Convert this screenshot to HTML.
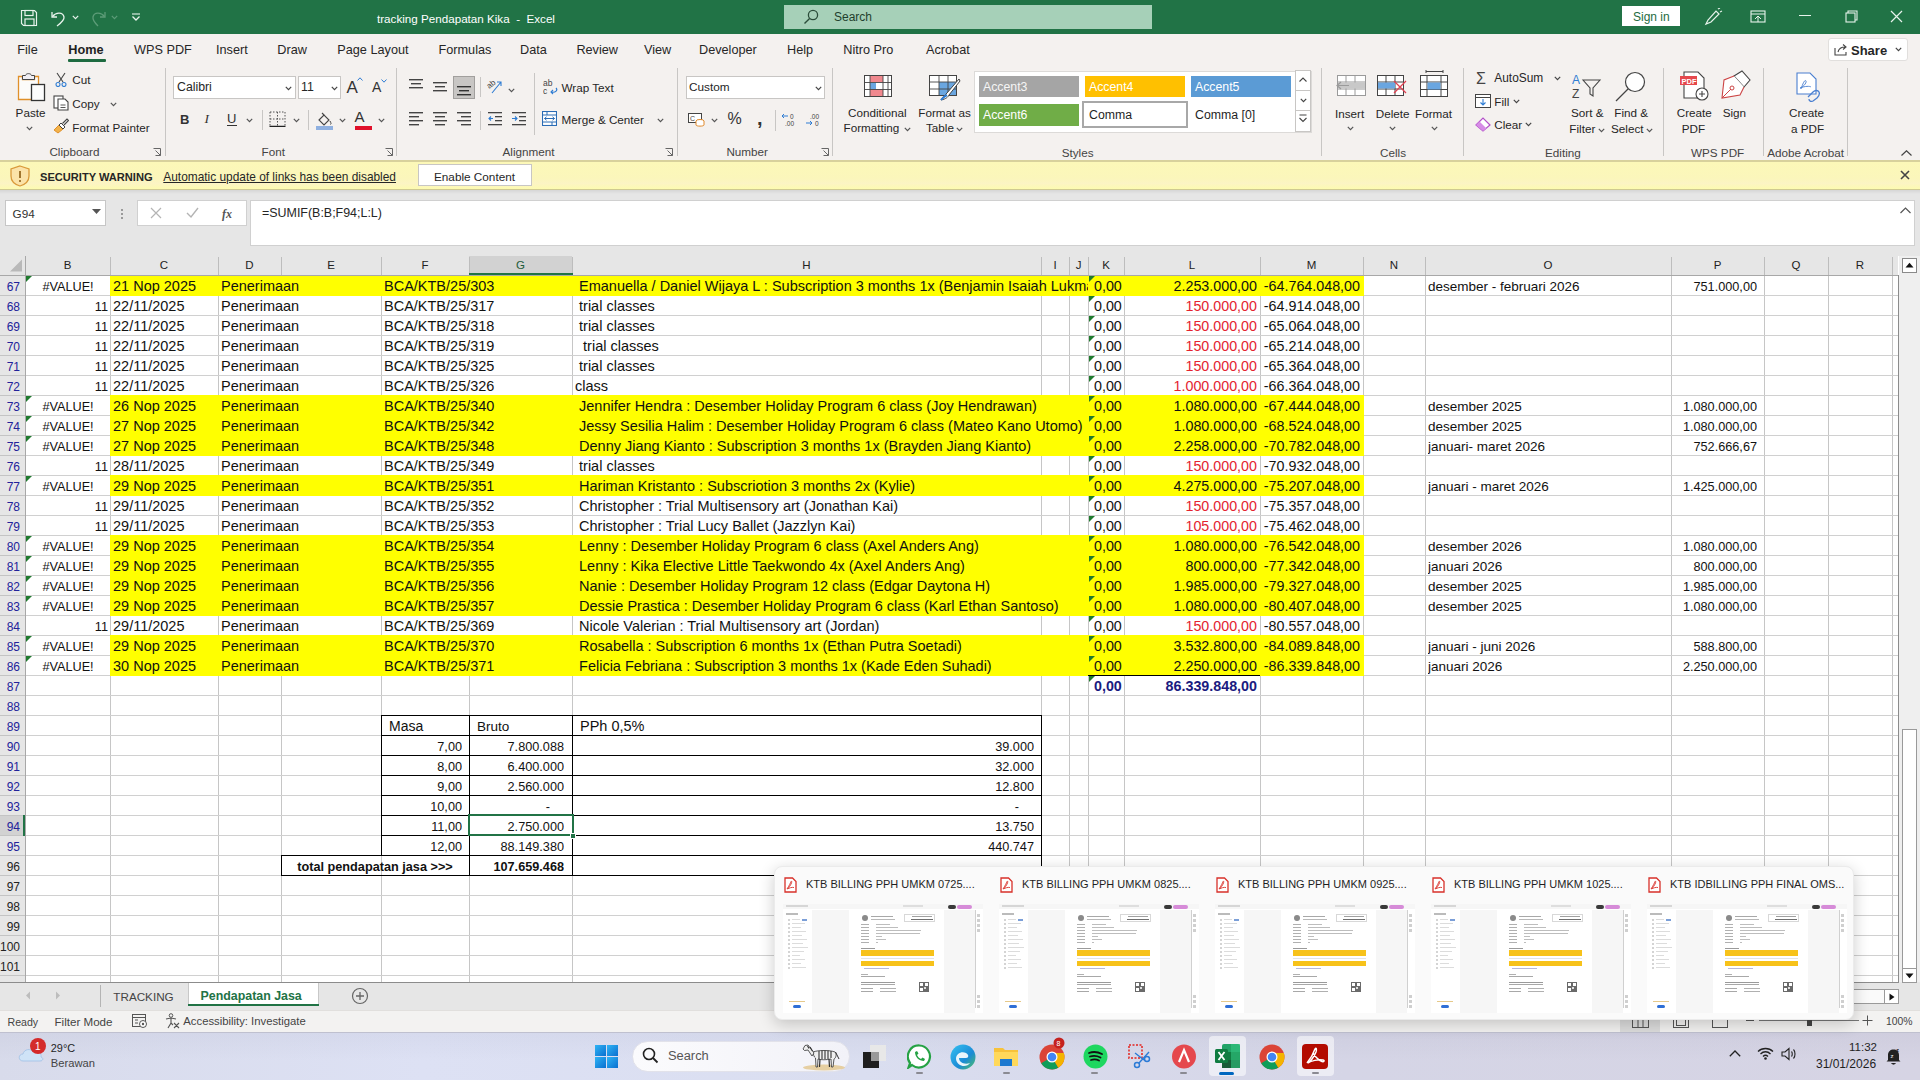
<!DOCTYPE html>
<html><head><meta charset="utf-8">
<style>
*{margin:0;padding:0;box-sizing:border-box}
html,body{width:1920px;height:1080px;overflow:hidden}
body{position:relative;font-family:"Liberation Sans",sans-serif;background:#fff;color:#000}
.a{position:absolute}
.t{position:absolute;white-space:nowrap;line-height:1}
.vl{position:absolute;top:276px;width:1px;height:706px;background:#c6c6c6}
.hl{position:absolute;left:25px;width:1873px;height:1px;background:#d0d0d0}
.yel{position:absolute;left:110px;width:1254px;background:#ffff00}
.c{position:absolute;height:19px;line-height:19px;white-space:nowrap;overflow:hidden;font-size:14.5px;color:#111}
.num{font-size:14.3px}
.cal{font-size:12.7px;margin-top:1px}
.calo{font-size:13.5px}
.red{color:#e4232f}
.navy{color:#1a1a80;font-weight:bold}
.bold{font-weight:bold}
.bk{position:absolute;background:#000}
.tri{position:absolute;width:0;height:0;border-top:6px solid #1f7a2e;border-right:6px solid transparent}
.ch{position:absolute;top:256px;height:19px;padding-top:4px;line-height:11.5px;text-align:center;font-size:11.5px}
.rh{position:absolute;left:0;width:25px;height:19px;padding-top:5px;line-height:12px;text-align:right;padding-right:5px;font-size:12px}
</style></head><body>
<div class="a" style="left:0px;top:0px;width:1920px;height:34px;background:#217346"></div>
<svg class="a" style="left:20px;top:9px;" width="18" height="18" viewBox="0 0 18 18"><path d="M1.5 1.5 H14.5 L16.5 3.5 V16.5 H3.5 L1.5 14.5 Z" fill="none" stroke="#e8f3ec" stroke-width="1.2"/><rect x="5" y="1.5" width="8" height="5" fill="none" stroke="#e8f3ec" stroke-width="1.2"/><rect x="5" y="10" width="9" height="6.5" fill="none" stroke="#e8f3ec" stroke-width="1.2"/></svg>
<svg class="a" style="left:50px;top:9px;" width="18" height="18" viewBox="0 0 18 18"><path d="M2 3 V8 H7" fill="none" stroke="#e8f3ec" stroke-width="1.3"/><path d="M2.5 7.5 C6 3 13 3 14 8 C14.5 11 11 14 7 17" fill="none" stroke="#e8f3ec" stroke-width="1.3"/></svg>
<svg class="a" style="left:72px;top:15px;" width="7" height="5" viewBox="0 0 7 5"><path d="M0.8 0.8 L3.5 3.6 L6.2 0.8" fill="none" stroke="#e8f3ec" stroke-width="1.2"/></svg>
<svg class="a" style="left:89px;top:9px;" width="18" height="18" viewBox="0 0 18 18"><path d="M16 3 V8 H11" fill="none" stroke="#5d9c78" stroke-width="1.3"/><path d="M15.5 7.5 C12 3 5 3 4 8 C3.5 11 6 14 9 17" fill="none" stroke="#5d9c78" stroke-width="1.3"/></svg>
<svg class="a" style="left:111px;top:15px;" width="7" height="5" viewBox="0 0 7 5"><path d="M0.8 0.8 L3.5 3.6 L6.2 0.8" fill="none" stroke="#5d9c78" stroke-width="1.2"/></svg>
<svg class="a" style="left:131px;top:13px;" width="10" height="9" viewBox="0 0 10 9"><path d="M1 1 H9" stroke="#e8f3ec" stroke-width="1.1"/><path d="M1.5 3.5 L5 7 L8.5 3.5" fill="none" stroke="#e8f3ec" stroke-width="1.3"/></svg>
<div class="t " style="left:377px;top:12.64px;font-size:11.65px;color:#ffffff;font-weight:normal;white-space:pre">tracking Pendapatan Kika  -  Excel</div>
<div class="a" style="left:784px;top:5px;width:368px;height:24px;background:#a6d0b8"></div>
<svg class="a" style="left:803px;top:9px;" width="16" height="16" viewBox="0 0 16 16"><circle cx="10" cy="6" r="4.6" fill="none" stroke="#2b4d3a" stroke-width="1.3"/><path d="M6.6 9.4 L1.5 14.5" stroke="#2b4d3a" stroke-width="1.4"/></svg>
<div class="t " style="left:834px;top:11.34px;font-size:12px;color:#1f3f2d;font-weight:normal;">Search</div>
<div class="a" style="left:1622px;top:6px;width:58px;height:20px;background:#ffffff"></div>
<div class="t " style="left:1633px;top:11.34px;font-size:12px;color:#1e6b41;font-weight:normal;">Sign in</div>
<svg class="a" style="left:1703px;top:8px;" width="20" height="18" viewBox="0 0 20 18"><path d="M3 16 L5 12 L13 3 L16 6 L8 14 Z" fill="none" stroke="#e8f3ec" stroke-width="1.2"/><path d="M15 1 L17 0 M17 4 L19 3 M14 0 L14.5 -1" stroke="#e8f3ec" stroke-width="1.1"/></svg>
<svg class="a" style="left:1750px;top:10px;" width="16" height="14" viewBox="0 0 16 14"><rect x="1" y="1" width="14" height="11" fill="none" stroke="#e8f3ec" stroke-width="1.1"/><path d="M1 4 H15" stroke="#e8f3ec" stroke-width="1"/><path d="M5 9 L8 6 L11 9 M8 6 V12" fill="none" stroke="#e8f3ec" stroke-width="1"/></svg>
<div class="a" style="left:1799px;top:15px;width:12px;height:1px;background:#e8f3ec"></div>
<svg class="a" style="left:1845px;top:10px;" width="13" height="13" viewBox="0 0 13 13"><rect x="1" y="3" width="9" height="9" fill="none" stroke="#e8f3ec" stroke-width="1.1"/><path d="M3 3 V1 H12 V10 H10" fill="none" stroke="#e8f3ec" stroke-width="1.1"/></svg>
<svg class="a" style="left:1890px;top:10px;" width="13" height="13" viewBox="0 0 13 13"><path d="M1 1 L12 12 M12 1 L1 12" stroke="#e8f3ec" stroke-width="1.2"/></svg>
<div class="a" style="left:0px;top:34px;width:1920px;height:126px;background:#f4f1ef"></div>
<div class="t " style="left:17.3px;top:43.65px;font-size:12.7px;color:#262626;font-weight:normal;">File</div>
<div class="t " style="left:68.3px;top:43.65px;font-size:12.7px;color:#1f1f1f;font-weight:normal;font-weight:600;">Home</div>
<div class="t " style="left:134px;top:43.65px;font-size:12.7px;color:#262626;font-weight:normal;">WPS PDF</div>
<div class="t " style="left:216px;top:43.65px;font-size:12.7px;color:#262626;font-weight:normal;">Insert</div>
<div class="t " style="left:277.3px;top:43.65px;font-size:12.7px;color:#262626;font-weight:normal;">Draw</div>
<div class="t " style="left:337.3px;top:43.65px;font-size:12.7px;color:#262626;font-weight:normal;">Page Layout</div>
<div class="t " style="left:438.5px;top:43.65px;font-size:12.7px;color:#262626;font-weight:normal;">Formulas</div>
<div class="t " style="left:520px;top:43.65px;font-size:12.7px;color:#262626;font-weight:normal;">Data</div>
<div class="t " style="left:576.4px;top:43.65px;font-size:12.7px;color:#262626;font-weight:normal;">Review</div>
<div class="t " style="left:644px;top:43.65px;font-size:12.7px;color:#262626;font-weight:normal;">View</div>
<div class="t " style="left:699px;top:43.65px;font-size:12.7px;color:#262626;font-weight:normal;">Developer</div>
<div class="t " style="left:787px;top:43.65px;font-size:12.7px;color:#262626;font-weight:normal;">Help</div>
<div class="t " style="left:843.3px;top:43.65px;font-size:12.7px;color:#262626;font-weight:normal;">Nitro Pro</div>
<div class="t " style="left:926px;top:43.65px;font-size:12.7px;color:#262626;font-weight:normal;">Acrobat</div>
<div class="a" style="left:68px;top:59px;width:38px;height:3px;background:#1e6b41;border-radius:1px"></div>
<div class="a" style="left:1828px;top:38px;width:80px;height:23px;background:#ffffff;border:1px solid #e1dfdd;border-radius:3px"></div>
<svg class="a" style="left:1834px;top:43px;" width="15" height="13" viewBox="0 0 15 13"><path d="M1 5 V12 H12 V9" fill="none" stroke="#444" stroke-width="1.1"/><path d="M4 9 C5 5 8 4 11 4 M9 1.5 L12 4 L9 6.5" fill="none" stroke="#444" stroke-width="1.1"/></svg>
<div class="t " style="left:1851px;top:44.00px;font-size:13px;color:#262626;font-weight:normal;font-weight:bold">Share</div>
<svg class="a" style="left:1895px;top:47px;" width="7" height="5" viewBox="0 0 7 5"><path d="M0.8 0.8 L3.5 3.6 L6.2 0.8" fill="none" stroke="#444" stroke-width="1.2"/></svg>
<svg class="a" style="left:14px;top:71px;" width="32" height="32" viewBox="0 0 32 32"><path d="M4.5 5.5 H8.5 V8.5 H20.5 V5.5 H24.5 V28.5 H4.5 Z" fill="#fcfbfa" stroke="#e0902a" stroke-width="1.3"/><path d="M8.5 8.5 V4.5 H11.5 C12 2 17 2 17.5 4.5 H20.5 V8.5 Z" fill="#f0eef4" stroke="#444" stroke-width="1"/><rect x="17.5" y="13.5" width="13" height="16" fill="#fcfcfc" stroke="#333" stroke-width="1.3"/></svg>
<div class="t " style="left:15.6px;top:106.80px;font-size:11.7px;color:#262626;font-weight:normal;">Paste</div>
<svg class="a" style="left:26px;top:126px;" width="7" height="5" viewBox="0 0 7 5"><path d="M0.8 0.8 L3.5 3.6 L6.2 0.8" fill="none" stroke="#555" stroke-width="1.2"/></svg>
<svg class="a" style="left:55px;top:72px;" width="12" height="15" viewBox="0 0 12 15"><path d="M2 1 L8 10 M10 1 L4 10" stroke="#444" stroke-width="1.1"/><circle cx="3" cy="12.5" r="2" fill="none" stroke="#2e7cd3" stroke-width="1.1"/><circle cx="9" cy="12.5" r="2" fill="none" stroke="#2e7cd3" stroke-width="1.1"/></svg>
<div class="t " style="left:72.3px;top:74.10px;font-size:11.7px;color:#262626;font-weight:normal;">Cut</div>
<svg class="a" style="left:53px;top:95px;" width="16" height="16" viewBox="0 0 16 16"><rect x="1" y="1" width="9" height="12" fill="#fff" stroke="#444" stroke-width="1.1"/><path d="M5 4 H12 L15 7 V15 H5 Z" fill="#fff" stroke="#444" stroke-width="1.1"/><path d="M7.5 10 H12.5 M7.5 12.5 H12.5" stroke="#444" stroke-width="0.9"/></svg>
<div class="t " style="left:72.3px;top:97.60px;font-size:11.7px;color:#262626;font-weight:normal;">Copy</div>
<svg class="a" style="left:110px;top:102px;" width="7" height="5" viewBox="0 0 7 5"><path d="M0.8 0.8 L3.5 3.6 L6.2 0.8" fill="none" stroke="#555" stroke-width="1.2"/></svg>
<svg class="a" style="left:53px;top:118px;" width="16" height="16" viewBox="0 0 16 16"><path d="M1 12 L6 7 L10 11 L5 15 Z" fill="#f2b24a" stroke="#e0902a" stroke-width="1"/><path d="M6 7 L8 5 L12 9 L10 11 Z" fill="#fff" stroke="#444" stroke-width="1"/><path d="M9.5 5.5 L14 1 L15.5 2.5 L11 7" fill="#fff" stroke="#444" stroke-width="1.1"/></svg>
<div class="t " style="left:72.3px;top:121.60px;font-size:11.7px;color:#262626;font-weight:normal;">Format Painter</div>
<div class="t " style="left:49.4px;top:146.30px;font-size:11.7px;color:#444;font-weight:normal;">Clipboard</div>
<svg class="a" style="left:153px;top:148px;" width="8" height="8" viewBox="0 0 8 8"><path d="M0.5 0.5 H7.5 V7.5 M7.5 7.5 L2.5 2.5 M2.5 7.5 H7.5" fill="none" stroke="#666" stroke-width="1"/></svg>
<div class="a" style="left:164.5px;top:68px;width:1px;height:88px;background:#c8c6c4"></div>
<div class="a" style="left:173px;top:76px;width:123px;height:23px;background:#fff;border:1px solid #c8c6c4"></div>
<div class="t " style="left:177px;top:81.29px;font-size:12.3px;color:#262626;font-weight:normal;">Calibri</div>
<svg class="a" style="left:285px;top:86px;" width="7" height="5" viewBox="0 0 7 5"><path d="M0.8 0.8 L3.5 3.6 L6.2 0.8" fill="none" stroke="#444" stroke-width="1.2"/></svg>
<div class="a" style="left:298px;top:76px;width:43px;height:23px;background:#fff;border:1px solid #c8c6c4"></div>
<div class="t " style="left:301px;top:81.29px;font-size:12.3px;color:#262626;font-weight:normal;">11</div>
<svg class="a" style="left:331px;top:86px;" width="7" height="5" viewBox="0 0 7 5"><path d="M0.8 0.8 L3.5 3.6 L6.2 0.8" fill="none" stroke="#444" stroke-width="1.2"/></svg>
<div class="t " style="left:346.5px;top:78.61px;font-size:17px;color:#333;font-weight:normal;">A</div>
<svg class="a" style="left:357px;top:77px;" width="6" height="4" viewBox="0 0 6 4"><path d="M0.5 3.5 L3 0.8 L5.5 3.5" fill="none" stroke="#2e7cd3" stroke-width="1"/></svg>
<div class="t " style="left:372px;top:80.15px;font-size:14px;color:#333;font-weight:normal;">A</div>
<svg class="a" style="left:381px;top:79px;" width="6" height="4" viewBox="0 0 6 4"><path d="M0.5 0.5 L3 3.2 L5.5 0.5" fill="none" stroke="#2e7cd3" stroke-width="1"/></svg>
<div class="t " style="left:180px;top:112.50px;font-size:13px;color:#333;font-weight:normal;font-weight:bold">B</div>
<div class="t " style="left:204.5px;top:112.07px;font-size:13.5px;color:#333;font-weight:normal;font-style:italic;font-family:Liberation Serif,serif">I</div>
<div class="t " style="left:227px;top:111.50px;font-size:13px;color:#333;font-weight:normal;">U</div>
<div class="a" style="left:227px;top:125px;width:10px;height:1px;background:#333"></div>
<svg class="a" style="left:246px;top:118px;" width="7" height="5" viewBox="0 0 7 5"><path d="M0.8 0.8 L3.5 3.6 L6.2 0.8" fill="none" stroke="#555" stroke-width="1.2"/></svg>
<div class="a" style="left:262px;top:110px;width:1px;height:20px;background:#c8c6c4"></div>
<svg class="a" style="left:269px;top:111px;" width="17" height="16" viewBox="0 0 17 16"><path d="M1 1 H16 M1 8 H16 M8.5 1 V15 M1 1 V15 M16 1 V15" fill="none" stroke="#555" stroke-width="1" stroke-dasharray="1.5 1.5"/><path d="M0.5 15.5 H16.5" stroke="#222" stroke-width="1.5"/></svg>
<svg class="a" style="left:293px;top:118px;" width="7" height="5" viewBox="0 0 7 5"><path d="M0.8 0.8 L3.5 3.6 L6.2 0.8" fill="none" stroke="#555" stroke-width="1.2"/></svg>
<div class="a" style="left:308px;top:110px;width:1px;height:20px;background:#c8c6c4"></div>
<svg class="a" style="left:315px;top:112px;" width="18" height="16" viewBox="0 0 18 16"><path d="M4 8 L9 3 L14 8 L9 13 Z" fill="none" stroke="#444" stroke-width="1.1"/><path d="M9 3 L7 1" stroke="#444" stroke-width="1.1"/><path d="M15 9 C16 11 16.5 12 15.5 12.5" fill="none" stroke="#444" stroke-width="1"/></svg>
<div class="a" style="left:315.5px;top:125.5px;width:17px;height:4px;background:#8fb0e0"></div>
<svg class="a" style="left:339px;top:118px;" width="7" height="5" viewBox="0 0 7 5"><path d="M0.8 0.8 L3.5 3.6 L6.2 0.8" fill="none" stroke="#555" stroke-width="1.2"/></svg>
<div class="t " style="left:354.5px;top:109.30px;font-size:15px;color:#333;font-weight:normal;">A</div>
<div class="a" style="left:354.5px;top:125.5px;width:17px;height:4px;background:#e0102a"></div>
<svg class="a" style="left:378px;top:118px;" width="7" height="5" viewBox="0 0 7 5"><path d="M0.8 0.8 L3.5 3.6 L6.2 0.8" fill="none" stroke="#555" stroke-width="1.2"/></svg>
<div class="t " style="left:261.5px;top:146.30px;font-size:11.7px;color:#444;font-weight:normal;">Font</div>
<svg class="a" style="left:385px;top:148px;" width="8" height="8" viewBox="0 0 8 8"><path d="M0.5 0.5 H7.5 V7.5 M7.5 7.5 L2.5 2.5 M2.5 7.5 H7.5" fill="none" stroke="#666" stroke-width="1"/></svg>
<div class="a" style="left:396px;top:68px;width:1px;height:88px;background:#c8c6c4"></div>
<svg class="a" style="left:409px;top:79px;" width="16" height="12" viewBox="0 0 16 12"><rect x="0" y="0" width="14" height="1.4" fill="#444"/><rect x="2" y="4" width="10" height="1.4" fill="#444"/><rect x="0" y="8" width="14" height="1.4" fill="#444"/></svg>
<svg class="a" style="left:433px;top:82px;" width="16" height="12" viewBox="0 0 16 12"><rect x="0" y="0" width="14" height="1.4" fill="#444"/><rect x="2" y="4" width="10" height="1.4" fill="#444"/><rect x="0" y="8" width="14" height="1.4" fill="#444"/></svg>
<div class="a" style="left:453px;top:76px;width:22px;height:23px;background:#c8c6c4;border:1px solid #a19f9d"></div>
<svg class="a" style="left:457px;top:86px;" width="16" height="12" viewBox="0 0 16 12"><rect x="0" y="0" width="14" height="1.4" fill="#333"/><rect x="2" y="4" width="10" height="1.4" fill="#333"/><rect x="0" y="8" width="14" height="1.4" fill="#333"/></svg>
<div class="a" style="left:479.5px;top:77px;width:1px;height:20px;background:#c8c6c4"></div>
<svg class="a" style="left:486px;top:78px;" width="18" height="17" viewBox="0 0 18 17"><text x="1" y="9" font-size="8" fill="#444" transform="rotate(-40 5 7)" font-family="Liberation Sans">ab</text><path d="M6 15 L15 4 M11 4 H15 V8" fill="none" stroke="#2e7cd3" stroke-width="1.1"/></svg>
<svg class="a" style="left:508px;top:88px;" width="7" height="5" viewBox="0 0 7 5"><path d="M0.8 0.8 L3.5 3.6 L6.2 0.8" fill="none" stroke="#555" stroke-width="1.2"/></svg>
<svg class="a" style="left:409px;top:112px;" width="14" height="16" viewBox="0 0 14 16"><rect x="0" y="0" width="14" height="1.4" fill="#444"/><rect x="0" y="4" width="10" height="1.4" fill="#444"/><rect x="0" y="8" width="14" height="1.4" fill="#444"/><rect x="0" y="12" width="10" height="1.4" fill="#444"/></svg>
<svg class="a" style="left:433px;top:112px;" width="16" height="16" viewBox="0 0 16 16"><rect x="0" y="0" width="14" height="1.4" fill="#444"/><rect x="2" y="4" width="10" height="1.4" fill="#444"/><rect x="0" y="8" width="14" height="1.4" fill="#444"/><rect x="2" y="12" width="10" height="1.4" fill="#444"/></svg>
<svg class="a" style="left:457px;top:112px;" width="18" height="16" viewBox="0 0 18 16"><rect x="0" y="0" width="14" height="1.4" fill="#444"/><rect x="4" y="4" width="10" height="1.4" fill="#444"/><rect x="0" y="8" width="14" height="1.4" fill="#444"/><rect x="4" y="12" width="10" height="1.4" fill="#444"/></svg>
<div class="a" style="left:479.5px;top:111px;width:1px;height:19px;background:#c8c6c4"></div>
<svg class="a" style="left:488px;top:112px;" width="15" height="14" viewBox="0 0 15 14"><rect x="0" y="0" width="14" height="1.3" fill="#444"/><rect x="7" y="4" width="7" height="1.3" fill="#444"/><rect x="7" y="8" width="7" height="1.3" fill="#444"/><rect x="0" y="12" width="14" height="1.3" fill="#444"/><path d="M5 6.5 H1 M3 4.5 L1 6.5 L3 8.5" fill="none" stroke="#2e7cd3" stroke-width="1.1"/></svg>
<svg class="a" style="left:512px;top:112px;" width="15" height="14" viewBox="0 0 15 14"><rect x="0" y="0" width="14" height="1.3" fill="#444"/><rect x="7" y="4" width="7" height="1.3" fill="#444"/><rect x="7" y="8" width="7" height="1.3" fill="#444"/><rect x="0" y="12" width="14" height="1.3" fill="#444"/><path d="M0 6.5 H5 M3 4.5 L5 6.5 L3 8.5" fill="none" stroke="#2e7cd3" stroke-width="1.1"/></svg>
<div class="a" style="left:534.3px;top:73px;width:1px;height:62px;background:#c8c6c4"></div>
<svg class="a" style="left:543px;top:79px;" width="16" height="16" viewBox="0 0 16 16"><text x="0" y="7" font-size="8.5" fill="#444" font-family="Liberation Sans">ab</text><text x="0" y="15" font-size="8.5" fill="#444" font-family="Liberation Sans">c</text><path d="M13 9 C15 11 13 14 8 13 M10 11 L8 13 L10 15" fill="none" stroke="#2e7cd3" stroke-width="1.1"/></svg>
<div class="t " style="left:561.5px;top:81.80px;font-size:11.7px;color:#262626;font-weight:normal;">Wrap Text</div>
<svg class="a" style="left:542px;top:111px;" width="15" height="15" viewBox="0 0 15 15"><rect x="0.5" y="0.5" width="14" height="14" fill="#fff" stroke="#2b6cb5" stroke-width="1.1"/><path d="M0.5 4 H14.5 M0.5 11 H14.5 M5 0.5 V4 M10 11 V14.5" stroke="#2b6cb5" stroke-width="1"/><path d="M2.5 7.5 H12.5 M4.5 5.8 L2.5 7.5 L4.5 9.2 M10.5 5.8 L12.5 7.5 L10.5 9.2" fill="none" stroke="#2b6cb5" stroke-width="1"/></svg>
<div class="t " style="left:561.5px;top:113.50px;font-size:11.7px;color:#262626;font-weight:normal;">Merge &amp; Center</div>
<svg class="a" style="left:657px;top:118px;" width="7" height="5" viewBox="0 0 7 5"><path d="M0.8 0.8 L3.5 3.6 L6.2 0.8" fill="none" stroke="#555" stroke-width="1.2"/></svg>
<div class="t " style="left:502.5px;top:145.60px;font-size:11.7px;color:#444;font-weight:normal;">Alignment</div>
<svg class="a" style="left:665px;top:148px;" width="8" height="8" viewBox="0 0 8 8"><path d="M0.5 0.5 H7.5 V7.5 M7.5 7.5 L2.5 2.5 M2.5 7.5 H7.5" fill="none" stroke="#666" stroke-width="1"/></svg>
<div class="a" style="left:676.6px;top:68px;width:1px;height:88px;background:#c8c6c4"></div>
<div class="a" style="left:685.5px;top:76px;width:139.5px;height:23px;background:#fff;border:1px solid #c8c6c4"></div>
<div class="t " style="left:689px;top:81.81px;font-size:11.8px;color:#262626;font-weight:normal;">Custom</div>
<svg class="a" style="left:815px;top:86px;" width="7" height="5" viewBox="0 0 7 5"><path d="M0.8 0.8 L3.5 3.6 L6.2 0.8" fill="none" stroke="#444" stroke-width="1.2"/></svg>
<svg class="a" style="left:688px;top:113px;" width="17" height="14" viewBox="0 0 17 14"><rect x="0.5" y="0.5" width="13" height="9" fill="#fff" stroke="#444" stroke-width="1"/><text x="2" y="8" font-size="7" fill="#444" font-family="Liberation Sans">C</text><ellipse cx="12" cy="8" rx="4" ry="1.5" fill="#fff" stroke="#e08a2c"/><path d="M8 8 V12 C8 13.5 16 13.5 16 12 V8" fill="#fff" stroke="#e08a2c"/></svg>
<svg class="a" style="left:711px;top:118px;" width="7" height="5" viewBox="0 0 7 5"><path d="M0.8 0.8 L3.5 3.6 L6.2 0.8" fill="none" stroke="#555" stroke-width="1.2"/></svg>
<div class="t " style="left:727.5px;top:111.46px;font-size:16px;color:#333;font-weight:normal;">%</div>
<div class="t " style="left:757px;top:108.07px;font-size:20px;color:#333;font-weight:normal;font-weight:bold">,</div>
<div class="a" style="left:774.5px;top:110px;width:1px;height:21px;background:#c8c6c4"></div>
<svg class="a" style="left:781px;top:113px;" width="17" height="14" viewBox="0 0 17 14"><path d="M7 3 H1 M3 1 L1 3 L3 5" fill="none" stroke="#2e7cd3" stroke-width="1"/><text x="9" y="6" font-size="6.5" fill="#444" font-family="Liberation Sans">0</text><text x="4" y="13" font-size="6.5" fill="#444" font-family="Liberation Sans">.00</text></svg>
<svg class="a" style="left:805px;top:113px;" width="17" height="14" viewBox="0 0 17 14"><text x="5" y="6" font-size="6.5" fill="#444" font-family="Liberation Sans">.00</text><path d="M1 10 H7 M5 8 L7 10 L5 12" fill="none" stroke="#2e7cd3" stroke-width="1"/><text x="10" y="13" font-size="6.5" fill="#444" font-family="Liberation Sans">0</text></svg>
<div class="t " style="left:726.4px;top:146.00px;font-size:11.7px;color:#444;font-weight:normal;">Number</div>
<svg class="a" style="left:821px;top:148px;" width="8" height="8" viewBox="0 0 8 8"><path d="M0.5 0.5 H7.5 V7.5 M7.5 7.5 L2.5 2.5 M2.5 7.5 H7.5" fill="none" stroke="#666" stroke-width="1"/></svg>
<div class="a" style="left:832.4px;top:68px;width:1px;height:88px;background:#c8c6c4"></div>
<svg class="a" style="left:864px;top:75px;" width="28" height="22" viewBox="0 0 28 22"><rect x="0.5" y="0.5" width="27" height="21" fill="#fff" stroke="#444" stroke-width="1"/><rect x="6" y="1" width="13" height="6" fill="#f0888e"/><rect x="6" y="8" width="6" height="6" fill="#6aa6e0"/><rect x="6" y="14" width="13" height="7" fill="#f0888e"/><path d="M0.5 7.5 H27.5 M0.5 14.5 H27.5 M6 0.5 V21.5 M19 0.5 V21.5 M24 0.5 V21.5" stroke="#444" stroke-width="0.9"/></svg>
<div class="t " style="left:848px;top:106.80px;font-size:11.7px;color:#262626;font-weight:normal;">Conditional</div>
<div class="t " style="left:843.5px;top:122.30px;font-size:11.7px;color:#262626;font-weight:normal;">Formatting</div>
<svg class="a" style="left:904px;top:127px;" width="7" height="5" viewBox="0 0 7 5"><path d="M0.8 0.8 L3.5 3.6 L6.2 0.8" fill="none" stroke="#555" stroke-width="1.2"/></svg>
<svg class="a" style="left:929px;top:75px;" width="32" height="27" viewBox="0 0 32 27"><rect x="0.5" y="0.5" width="27" height="20" fill="#fff" stroke="#444" stroke-width="1"/><rect x="10" y="7" width="17" height="13" fill="#6aa6e0"/><path d="M0.5 7 H27.5 M0.5 14 H27.5 M10 0.5 V20.5 M19 0.5 V20.5" stroke="#444" stroke-width="0.9"/><path d="M30 4 L18 18 C16 20 14 22 12 25 C17 24 19 22 20 20 L31 6 Z" fill="#fff" stroke="#444" stroke-width="1"/><path d="M12 25 C14 22 16 21 18 20" fill="#2e7cd3" stroke="#2e7cd3" stroke-width="2"/></svg>
<div class="t " style="left:918.3px;top:106.80px;font-size:11.7px;color:#262626;font-weight:normal;">Format as</div>
<div class="t " style="left:926px;top:122.30px;font-size:11.7px;color:#262626;font-weight:normal;">Table</div>
<svg class="a" style="left:956px;top:127px;" width="7" height="5" viewBox="0 0 7 5"><path d="M0.8 0.8 L3.5 3.6 L6.2 0.8" fill="none" stroke="#555" stroke-width="1.2"/></svg>
<div class="a" style="left:974px;top:71px;width:338px;height:62px;background:#fff;border:1px solid #dcdad8"></div>
<div class="a" style="left:979px;top:76px;width:100px;height:21px;background:#a5a5a5"></div>
<div class="t " style="left:983px;top:81.09px;font-size:12.3px;color:#f5f5f5;font-weight:normal;">Accent3</div>
<div class="a" style="left:1085px;top:76px;width:100px;height:21px;background:#ffc000"></div>
<div class="t " style="left:1089px;top:81.09px;font-size:12.3px;color:#ffffff;font-weight:normal;">Accent4</div>
<div class="a" style="left:1191px;top:76px;width:100px;height:21px;background:#5b9bd5"></div>
<div class="t " style="left:1195px;top:81.09px;font-size:12.3px;color:#ffffff;font-weight:normal;">Accent5</div>
<div class="a" style="left:979px;top:104px;width:100px;height:22px;background:#70ad47"></div>
<div class="t " style="left:983px;top:109.09px;font-size:12.3px;color:#ffffff;font-weight:normal;">Accent6</div>
<div class="a" style="left:1082px;top:101px;width:106px;height:27px;background:#fff;border:2px solid #a8a8a8"></div>
<div class="t " style="left:1089px;top:109.09px;font-size:12.3px;color:#1f1f1f;font-weight:normal;">Comma</div>
<div class="t " style="left:1195px;top:109.09px;font-size:12.3px;color:#1f1f1f;font-weight:normal;">Comma [0]</div>
<div class="a" style="left:1295px;top:70px;width:16px;height:62px;background:#fff;border:1px solid #c8c6c4"></div>
<div class="a" style="left:1295px;top:90px;width:16px;height:1px;background:#c8c6c4"></div>
<div class="a" style="left:1295px;top:110px;width:16px;height:1px;background:#c8c6c4"></div>
<svg class="a" style="left:1299px;top:77px;" width="8" height="5" viewBox="0 0 8 5"><path d="M0.5 4.5 L4 1 L7.5 4.5" fill="none" stroke="#444" stroke-width="1.1"/></svg>
<svg class="a" style="left:1300px;top:98px;" width="7" height="5" viewBox="0 0 7 5"><path d="M0.8 0.8 L3.5 3.6 L6.2 0.8" fill="none" stroke="#444" stroke-width="1.2"/></svg>
<svg class="a" style="left:1299px;top:114px;" width="8" height="10" viewBox="0 0 8 10"><path d="M0.5 1 H7.5" stroke="#444" stroke-width="1"/><path d="M0.5 4 L4 7.5 L7.5 4" fill="none" stroke="#444" stroke-width="1.1"/></svg>
<div class="t " style="left:1061.7px;top:146.80px;font-size:11.7px;color:#444;font-weight:normal;">Styles</div>
<div class="a" style="left:1320.7px;top:68px;width:1px;height:88px;background:#c8c6c4"></div>
<svg class="a" style="left:1335px;top:73px;" width="32" height="26" viewBox="0 0 32 26"><g stroke="#9a9a9a" fill="#fff" stroke-width="1"><rect x="2.5" y="2.5" width="28" height="20"/><path d="M2.5 9 H30.5 M2.5 16 H30.5 M11 2.5 V22.5 M20 2.5 V22.5"/></g><rect x="3" y="9.5" width="27" height="6" fill="#c8c8c8"/><path d="M14 12.5 H2 M6 9 L2 12.5 L6 16" fill="none" stroke="#9a9a9a" stroke-width="1.2"/></svg>
<div class="t " style="left:1335px;top:108.40px;font-size:11.7px;color:#262626;font-weight:normal;">Insert</div>
<svg class="a" style="left:1347px;top:126px;" width="7" height="5" viewBox="0 0 7 5"><path d="M0.8 0.8 L3.5 3.6 L6.2 0.8" fill="none" stroke="#555" stroke-width="1.2"/></svg>
<svg class="a" style="left:1377px;top:73px;" width="31" height="26" viewBox="0 0 31 26"><g stroke="#444" fill="#fff" stroke-width="1"><rect x="0.5" y="2.5" width="26" height="20"/><path d="M0.5 9 H26.5 M0.5 16 H26.5 M9 2.5 V22.5 M18 2.5 V22.5"/></g><rect x="1" y="9.5" width="17" height="6" fill="#6aa6e0"/><path d="M17 8 L29 20 M29 8 L17 20" stroke="#e04050" stroke-width="1.3"/></svg>
<div class="t " style="left:1375.7px;top:108.40px;font-size:11.7px;color:#262626;font-weight:normal;">Delete</div>
<svg class="a" style="left:1389px;top:126px;" width="7" height="5" viewBox="0 0 7 5"><path d="M0.8 0.8 L3.5 3.6 L6.2 0.8" fill="none" stroke="#555" stroke-width="1.2"/></svg>
<svg class="a" style="left:1420px;top:70px;" width="29" height="28" viewBox="0 0 29 28"><path d="M6 1.5 H23 M6 0 V3 M23 0 V3" stroke="#444" stroke-width="1"/><g stroke="#444" fill="#fff" stroke-width="1"><rect x="0.5" y="5.5" width="27" height="21"/><path d="M0.5 12 H27.5 M0.5 19.5 H27.5 M7 5.5 V26.5 M21 5.5 V26.5"/></g><rect x="7.5" y="12.5" width="13" height="7" fill="#6aa6e0"/></svg>
<div class="t " style="left:1415px;top:108.40px;font-size:11.7px;color:#262626;font-weight:normal;">Format</div>
<svg class="a" style="left:1431px;top:126px;" width="7" height="5" viewBox="0 0 7 5"><path d="M0.8 0.8 L3.5 3.6 L6.2 0.8" fill="none" stroke="#555" stroke-width="1.2"/></svg>
<div class="t " style="left:1380px;top:146.80px;font-size:11.7px;color:#444;font-weight:normal;">Cells</div>
<div class="a" style="left:1463.3px;top:68px;width:1px;height:88px;background:#c8c6c4"></div>
<div class="t " style="left:1476px;top:70.96px;font-size:16px;color:#444;font-weight:normal;">Σ</div>
<div class="t " style="left:1494.3px;top:73.23px;font-size:11.9px;color:#262626;font-weight:normal;">AutoSum</div>
<svg class="a" style="left:1554px;top:76px;" width="7" height="5" viewBox="0 0 7 5"><path d="M0.8 0.8 L3.5 3.6 L6.2 0.8" fill="none" stroke="#444" stroke-width="1.2"/></svg>
<svg class="a" style="left:1475px;top:94px;" width="16" height="14" viewBox="0 0 16 14"><rect x="0.5" y="0.5" width="15" height="13" fill="#fff" stroke="#444" stroke-width="1"/><path d="M0.5 3.5 H15.5" stroke="#444" stroke-width="1"/><path d="M8 5 V11 M5.5 8.5 L8 11 L10.5 8.5" fill="none" stroke="#2e7cd3" stroke-width="1.1"/></svg>
<div class="t " style="left:1494.3px;top:96.10px;font-size:11.7px;color:#262626;font-weight:normal;">Fill</div>
<svg class="a" style="left:1513px;top:99px;" width="7" height="5" viewBox="0 0 7 5"><path d="M0.8 0.8 L3.5 3.6 L6.2 0.8" fill="none" stroke="#444" stroke-width="1.2"/></svg>
<svg class="a" style="left:1475px;top:116px;" width="16" height="16" viewBox="0 0 16 16"><path d="M1 9 L8 2 L15 9 L8 15 Z" fill="#fff" stroke="#b24fc9" stroke-width="1.2"/><path d="M1 9 L4.5 5.5 L11.5 12.5 L8 15 Z" fill="#d68ce6"/></svg>
<div class="t " style="left:1494.3px;top:119.40px;font-size:11.7px;color:#262626;font-weight:normal;">Clear</div>
<svg class="a" style="left:1525px;top:122px;" width="7" height="5" viewBox="0 0 7 5"><path d="M0.8 0.8 L3.5 3.6 L6.2 0.8" fill="none" stroke="#444" stroke-width="1.2"/></svg>
<svg class="a" style="left:1572px;top:72px;" width="32" height="28" viewBox="0 0 32 28"><text x="0" y="12" font-size="12" fill="#2e7cd3" font-family="Liberation Sans">A</text><text x="0" y="26" font-size="12" fill="#444" font-family="Liberation Sans">Z</text><path d="M11 8 H28 L21 16 V24 L18 22 V16 Z" fill="none" stroke="#444" stroke-width="1.1"/></svg>
<div class="t " style="left:1571px;top:107.40px;font-size:11.7px;color:#262626;font-weight:normal;">Sort &amp;</div>
<div class="t " style="left:1569.3px;top:123.40px;font-size:11.7px;color:#262626;font-weight:normal;">Filter</div>
<svg class="a" style="left:1598px;top:128px;" width="7" height="5" viewBox="0 0 7 5"><path d="M0.8 0.8 L3.5 3.6 L6.2 0.8" fill="none" stroke="#555" stroke-width="1.2"/></svg>
<svg class="a" style="left:1614px;top:70px;" width="36" height="32" viewBox="0 0 36 32"><circle cx="21" cy="12" r="9.5" fill="#fff" stroke="#444" stroke-width="1.2"/><path d="M14 19 L2 31" stroke="#444" stroke-width="1.3"/></svg>
<div class="t " style="left:1614.3px;top:107.40px;font-size:11.7px;color:#262626;font-weight:normal;">Find &amp;</div>
<div class="t " style="left:1611px;top:123.40px;font-size:11.7px;color:#262626;font-weight:normal;">Select</div>
<svg class="a" style="left:1646px;top:128px;" width="7" height="5" viewBox="0 0 7 5"><path d="M0.8 0.8 L3.5 3.6 L6.2 0.8" fill="none" stroke="#555" stroke-width="1.2"/></svg>
<div class="t " style="left:1545px;top:146.80px;font-size:11.7px;color:#444;font-weight:normal;">Editing</div>
<div class="a" style="left:1663.3px;top:68px;width:1px;height:88px;background:#c8c6c4"></div>
<svg class="a" style="left:1678px;top:70px;" width="32" height="32" viewBox="0 0 32 32"><path d="M6 2 H20 L26 8 V28 H6 Z" fill="#fff" stroke="#444" stroke-width="1.1"/><rect x="2" y="6" width="17" height="9" fill="#e5484d"/><text x="3.5" y="13.5" font-size="7.5" fill="#fff" font-family="Liberation Sans" font-weight="bold">PDF</text><circle cx="24" cy="24" r="6" fill="#fff" stroke="#444" stroke-width="1.1"/><path d="M24 21 V27 M21 24 H27" stroke="#444" stroke-width="1.1"/></svg>
<div class="t " style="left:1676.7px;top:107.40px;font-size:11.7px;color:#262626;font-weight:normal;">Create</div>
<div class="t " style="left:1681.7px;top:123.40px;font-size:11.7px;color:#262626;font-weight:normal;">PDF</div>
<svg class="a" style="left:1720px;top:70px;" width="31" height="30" viewBox="0 0 31 30"><path d="M14 6 L22 1 L30 10 L24 17 Z" fill="#fff" stroke="#444" stroke-width="1.1"/><path d="M14 6 L4 10 L2 28 L20 25 L24 17" fill="#fff" stroke="#c44" stroke-width="1.1"/><circle cx="12" cy="18" r="2" fill="none" stroke="#c44"/><path d="M2 28 L11 19" stroke="#c44"/></svg>
<div class="t " style="left:1722.7px;top:107.40px;font-size:11.7px;color:#262626;font-weight:normal;">Sign</div>
<div class="t " style="left:1691px;top:146.80px;font-size:11.7px;color:#444;font-weight:normal;">WPS PDF</div>
<div class="a" style="left:1763.3px;top:68px;width:1px;height:88px;background:#c8c6c4"></div>
<svg class="a" style="left:1795px;top:72px;" width="28" height="30" viewBox="0 0 28 30"><path d="M2 1 H15 L21 7 V22 H2 Z" fill="#fff" stroke="#4a7fd0" stroke-width="1.1"/><path d="M6 17 C8 11 10 7 11 9 C12 11 7 16 5 16 C10 14 15 14 16 15" fill="none" stroke="#4a7fd0" stroke-width="0.9"/><path d="M13 25 L18 20 C20 18 23 18 24 20 C25 22 24 24 22 26 L18 29 C16 30 14 29 14 27" fill="none" stroke="#4a7fd0" stroke-width="1.3"/></svg>
<div class="t " style="left:1789px;top:107.40px;font-size:11.7px;color:#262626;font-weight:normal;">Create</div>
<div class="t " style="left:1791px;top:123.40px;font-size:11.7px;color:#262626;font-weight:normal;">a PDF</div>
<div class="t " style="left:1767.3px;top:146.80px;font-size:11.7px;color:#444;font-weight:normal;">Adobe Acrobat</div>
<div class="a" style="left:1846.7px;top:68px;width:1px;height:88px;background:#c8c6c4"></div>
<svg class="a" style="left:1901px;top:150px;" width="11" height="6" viewBox="0 0 11 6"><path d="M0.5 5.5 L5.5 0.8 L10.5 5.5" fill="none" stroke="#444" stroke-width="1.2"/></svg>
<div class="a" style="left:0px;top:160px;width:1920px;height:30px;background:linear-gradient(#fcf8b8,#fbf6bb 60%,#fcf4c4 80%,#fdfbb0);border-top:2px solid #d8d19c;border-bottom:1px solid #cfc992"></div>
<svg class="a" style="left:9px;top:165px;" width="22" height="22" viewBox="0 0 22 22"><path d="M11 1 L20 4 V11 C20 16 16 19.5 11 21 C6 19.5 2 16 2 11 V4 Z" fill="#fbe3a8" stroke="#d99a3a" stroke-width="1.3"/><path d="M11 6 V13" stroke="#8a5a10" stroke-width="1.6"/><circle cx="11" cy="16" r="1" fill="#8a5a10"/></svg>
<div class="t " style="left:40px;top:172.30px;font-size:11.1px;color:#262626;font-weight:normal;font-weight:bold">SECURITY WARNING</div>
<div class="t " style="left:163.3px;top:171.63px;font-size:11.9px;color:#262626;font-weight:normal;text-decoration:underline">Automatic update of links has been disabled</div>
<div class="a" style="left:418px;top:164px;width:114px;height:22px;background:#fff;border:1px solid #c8c6c4"></div>
<div class="t " style="left:434px;top:170.55px;font-size:11.75px;color:#262626;font-weight:normal;">Enable Content</div>
<svg class="a" style="left:1900px;top:170px;" width="10" height="10" viewBox="0 0 10 10"><path d="M1 1 L9 9 M9 1 L1 9" stroke="#444" stroke-width="1.6"/></svg>
<div class="a" style="left:0px;top:190px;width:1920px;height:66px;background:#e6e6e6"></div>
<div class="a" style="left:0px;top:190px;width:1920px;height:4px;background:linear-gradient(#d6d6d6,#e6e6e6)"></div>
<div class="a" style="left:5px;top:200px;width:101px;height:26px;background:#fff;border:1px solid #c6c6c6"></div>
<div class="t " style="left:12.5px;top:207.55px;font-size:11.75px;color:#333;font-weight:normal;">G94</div>
<svg class="a" style="left:92px;top:209px;" width="9" height="5" viewBox="0 0 9 5"><path d="M0 0 H9 L4.5 5 Z" fill="#555"/></svg>
<div class="a" style="left:121px;top:209px;width:2px;height:2px;background:#9a9a9a"></div>
<div class="a" style="left:121px;top:213px;width:2px;height:2px;background:#9a9a9a"></div>
<div class="a" style="left:121px;top:217px;width:2px;height:2px;background:#9a9a9a"></div>
<div class="a" style="left:137px;top:200px;width:110px;height:26px;background:#fff;border:1px solid #d0d0d0"></div>
<svg class="a" style="left:150px;top:207px;" width="12" height="12" viewBox="0 0 12 12"><path d="M1 1 L11 11 M11 1 L1 11" stroke="#b4b4b4" stroke-width="1.2"/></svg>
<svg class="a" style="left:186px;top:207px;" width="13" height="12" viewBox="0 0 13 12"><path d="M1 6 L5 10 L12 1" fill="none" stroke="#b4b4b4" stroke-width="1.4"/></svg>
<div class="t " style="left:222px;top:207.84px;font-size:12px;color:#555;font-weight:normal;font-style:italic;font-family:Liberation Serif,serif;font-weight:bold">fx</div>
<div class="a" style="left:250px;top:200px;width:1665px;height:46px;background:#fff;border:1px solid #d0d0d0"></div>
<div class="t " style="left:262px;top:206.96px;font-size:12.45px;color:#262626;font-weight:normal;">=SUMIF(B:B;F94;L:L)</div>
<svg class="a" style="left:1900px;top:207px;" width="11" height="7" viewBox="0 0 11 7"><path d="M0.5 6 L5.5 1 L10.5 6" fill="none" stroke="#555" stroke-width="1.2"/></svg>
<!-- grid -->
<div class="a" style="left:25px;top:276px;width:1873px;height:706px;background:#fff"></div>
<div class="vl" style="left:110px"></div>
<div class="vl" style="left:218px"></div>
<div class="vl" style="left:281px"></div>
<div class="vl" style="left:381px"></div>
<div class="vl" style="left:469px"></div>
<div class="vl" style="left:572px"></div>
<div class="vl" style="left:1041px"></div>
<div class="vl" style="left:1069px"></div>
<div class="vl" style="left:1088px"></div>
<div class="vl" style="left:1124px"></div>
<div class="vl" style="left:1260px"></div>
<div class="vl" style="left:1363px"></div>
<div class="vl" style="left:1425px"></div>
<div class="vl" style="left:1671px"></div>
<div class="vl" style="left:1764px"></div>
<div class="vl" style="left:1828px"></div>
<div class="vl" style="left:1892px"></div>
<div class="hl" style="top:295px"></div>
<div class="hl" style="top:315px"></div>
<div class="hl" style="top:335px"></div>
<div class="hl" style="top:355px"></div>
<div class="hl" style="top:375px"></div>
<div class="hl" style="top:395px"></div>
<div class="hl" style="top:415px"></div>
<div class="hl" style="top:435px"></div>
<div class="hl" style="top:455px"></div>
<div class="hl" style="top:475px"></div>
<div class="hl" style="top:495px"></div>
<div class="hl" style="top:515px"></div>
<div class="hl" style="top:535px"></div>
<div class="hl" style="top:555px"></div>
<div class="hl" style="top:575px"></div>
<div class="hl" style="top:595px"></div>
<div class="hl" style="top:615px"></div>
<div class="hl" style="top:635px"></div>
<div class="hl" style="top:655px"></div>
<div class="hl" style="top:675px"></div>
<div class="hl" style="top:695px"></div>
<div class="hl" style="top:715px"></div>
<div class="hl" style="top:735px"></div>
<div class="hl" style="top:755px"></div>
<div class="hl" style="top:775px"></div>
<div class="hl" style="top:795px"></div>
<div class="hl" style="top:815px"></div>
<div class="hl" style="top:835px"></div>
<div class="hl" style="top:855px"></div>
<div class="hl" style="top:875px"></div>
<div class="hl" style="top:895px"></div>
<div class="hl" style="top:915px"></div>
<div class="hl" style="top:935px"></div>
<div class="hl" style="top:955px"></div>
<div class="hl" style="top:975px"></div>
<div class="a" style="left:281px;top:296px;width:1px;height:19px;background:#fff"></div>
<div class="a" style="left:469px;top:296px;width:1px;height:19px;background:#fff"></div>
<div class="a" style="left:281px;top:316px;width:1px;height:19px;background:#fff"></div>
<div class="a" style="left:469px;top:316px;width:1px;height:19px;background:#fff"></div>
<div class="a" style="left:281px;top:336px;width:1px;height:19px;background:#fff"></div>
<div class="a" style="left:469px;top:336px;width:1px;height:19px;background:#fff"></div>
<div class="a" style="left:281px;top:356px;width:1px;height:19px;background:#fff"></div>
<div class="a" style="left:469px;top:356px;width:1px;height:19px;background:#fff"></div>
<div class="a" style="left:281px;top:376px;width:1px;height:19px;background:#fff"></div>
<div class="a" style="left:469px;top:376px;width:1px;height:19px;background:#fff"></div>
<div class="a" style="left:281px;top:456px;width:1px;height:19px;background:#fff"></div>
<div class="a" style="left:469px;top:456px;width:1px;height:19px;background:#fff"></div>
<div class="a" style="left:281px;top:496px;width:1px;height:19px;background:#fff"></div>
<div class="a" style="left:469px;top:496px;width:1px;height:19px;background:#fff"></div>
<div class="a" style="left:281px;top:516px;width:1px;height:19px;background:#fff"></div>
<div class="a" style="left:469px;top:516px;width:1px;height:19px;background:#fff"></div>
<div class="a" style="left:281px;top:616px;width:1px;height:19px;background:#fff"></div>
<div class="a" style="left:469px;top:616px;width:1px;height:19px;background:#fff"></div>
<div class="yel" style="top:275px;height:21px"></div>
<div class="yel" style="top:395px;height:21px"></div>
<div class="yel" style="top:415px;height:21px"></div>
<div class="yel" style="top:435px;height:21px"></div>
<div class="yel" style="top:475px;height:21px"></div>
<div class="yel" style="top:535px;height:21px"></div>
<div class="yel" style="top:555px;height:21px"></div>
<div class="yel" style="top:575px;height:21px"></div>
<div class="yel" style="top:595px;height:21px"></div>
<div class="yel" style="top:635px;height:21px"></div>
<div class="yel" style="top:655px;height:21px"></div>
<div class="c cal" style="left:25px;top:277px;width:85px;text-align:center;padding-left:1px">#VALUE!</div>
<div class="tri" style="left:26px;top:276px"></div>
<div class="c ar" style="left:113px;top:277px;width:105px;">21 Nop 2025</div>
<div class="c ar" style="left:221px;top:277px;width:160px;">Penerimaan</div>
<div class="c ar" style="left:384px;top:277px;width:188px;">BCA/KTB/25/303</div>
<div class="c ar" style="left:575px;top:277px;width:513px;white-space:pre"> Emanuella / Daniel Wijaya L : Subscription 3 months 1x (Benjamin Isaiah Lukman)</div>
<div class="tri" style="left:1089px;top:276px"></div>
<div class="c num" style="left:1094px;top:277px;width:30px;">0,00</div>
<div class="c num" style="left:1124px;top:277px;width:133px;text-align:right;">2.253.000,00</div>
<div class="c num" style="left:1260px;top:277px;width:100px;text-align:right;">-64.764.048,00</div>
<div class="c calo" style="left:1428px;top:277px;width:243px;">desember - februari 2026</div>
<div class="c cal" style="left:1671px;top:277px;width:86px;text-align:right;">751.000,00</div>
<div class="c cal" style="left:25px;top:297px;width:83px;text-align:right;">11</div>
<div class="c ar" style="left:113px;top:297px;width:105px;">22/11/2025</div>
<div class="c ar" style="left:221px;top:297px;width:160px;">Penerimaan</div>
<div class="c ar" style="left:384px;top:297px;width:188px;">BCA/KTB/25/317</div>
<div class="c ar" style="left:575px;top:297px;width:513px;white-space:pre"> trial classes</div>
<div class="tri" style="left:1089px;top:296px"></div>
<div class="c num" style="left:1094px;top:297px;width:30px;">0,00</div>
<div class="c num red" style="left:1124px;top:297px;width:133px;text-align:right;">150.000,00</div>
<div class="c num" style="left:1260px;top:297px;width:100px;text-align:right;">-64.914.048,00</div>
<div class="c cal" style="left:25px;top:317px;width:83px;text-align:right;">11</div>
<div class="c ar" style="left:113px;top:317px;width:105px;">22/11/2025</div>
<div class="c ar" style="left:221px;top:317px;width:160px;">Penerimaan</div>
<div class="c ar" style="left:384px;top:317px;width:188px;">BCA/KTB/25/318</div>
<div class="c ar" style="left:575px;top:317px;width:513px;white-space:pre"> trial classes</div>
<div class="tri" style="left:1089px;top:316px"></div>
<div class="c num" style="left:1094px;top:317px;width:30px;">0,00</div>
<div class="c num red" style="left:1124px;top:317px;width:133px;text-align:right;">150.000,00</div>
<div class="c num" style="left:1260px;top:317px;width:100px;text-align:right;">-65.064.048,00</div>
<div class="c cal" style="left:25px;top:337px;width:83px;text-align:right;">11</div>
<div class="c ar" style="left:113px;top:337px;width:105px;">22/11/2025</div>
<div class="c ar" style="left:221px;top:337px;width:160px;">Penerimaan</div>
<div class="c ar" style="left:384px;top:337px;width:188px;">BCA/KTB/25/319</div>
<div class="c ar" style="left:575px;top:337px;width:513px;white-space:pre">  trial classes</div>
<div class="tri" style="left:1089px;top:336px"></div>
<div class="c num" style="left:1094px;top:337px;width:30px;">0,00</div>
<div class="c num red" style="left:1124px;top:337px;width:133px;text-align:right;">150.000,00</div>
<div class="c num" style="left:1260px;top:337px;width:100px;text-align:right;">-65.214.048,00</div>
<div class="c cal" style="left:25px;top:357px;width:83px;text-align:right;">11</div>
<div class="c ar" style="left:113px;top:357px;width:105px;">22/11/2025</div>
<div class="c ar" style="left:221px;top:357px;width:160px;">Penerimaan</div>
<div class="c ar" style="left:384px;top:357px;width:188px;">BCA/KTB/25/325</div>
<div class="c ar" style="left:575px;top:357px;width:513px;white-space:pre"> trial classes</div>
<div class="tri" style="left:1089px;top:356px"></div>
<div class="c num" style="left:1094px;top:357px;width:30px;">0,00</div>
<div class="c num red" style="left:1124px;top:357px;width:133px;text-align:right;">150.000,00</div>
<div class="c num" style="left:1260px;top:357px;width:100px;text-align:right;">-65.364.048,00</div>
<div class="c cal" style="left:25px;top:377px;width:83px;text-align:right;">11</div>
<div class="c ar" style="left:113px;top:377px;width:105px;">22/11/2025</div>
<div class="c ar" style="left:221px;top:377px;width:160px;">Penerimaan</div>
<div class="c ar" style="left:384px;top:377px;width:188px;">BCA/KTB/25/326</div>
<div class="c ar" style="left:575px;top:377px;width:513px;white-space:pre">class</div>
<div class="tri" style="left:1089px;top:376px"></div>
<div class="c num" style="left:1094px;top:377px;width:30px;">0,00</div>
<div class="c num red" style="left:1124px;top:377px;width:133px;text-align:right;">1.000.000,00</div>
<div class="c num" style="left:1260px;top:377px;width:100px;text-align:right;">-66.364.048,00</div>
<div class="c cal" style="left:25px;top:397px;width:85px;text-align:center;padding-left:1px">#VALUE!</div>
<div class="tri" style="left:26px;top:396px"></div>
<div class="c ar" style="left:113px;top:397px;width:105px;">26 Nop 2025</div>
<div class="c ar" style="left:221px;top:397px;width:160px;">Penerimaan</div>
<div class="c ar" style="left:384px;top:397px;width:188px;">BCA/KTB/25/340</div>
<div class="c ar" style="left:575px;top:397px;width:513px;white-space:pre"> Jennifer Hendra : Desember Holiday Program 6 class (Joy Hendrawan)</div>
<div class="tri" style="left:1089px;top:396px"></div>
<div class="c num" style="left:1094px;top:397px;width:30px;">0,00</div>
<div class="c num" style="left:1124px;top:397px;width:133px;text-align:right;">1.080.000,00</div>
<div class="c num" style="left:1260px;top:397px;width:100px;text-align:right;">-67.444.048,00</div>
<div class="c calo" style="left:1428px;top:397px;width:243px;">desember 2025</div>
<div class="c cal" style="left:1671px;top:397px;width:86px;text-align:right;">1.080.000,00</div>
<div class="c cal" style="left:25px;top:417px;width:85px;text-align:center;padding-left:1px">#VALUE!</div>
<div class="tri" style="left:26px;top:416px"></div>
<div class="c ar" style="left:113px;top:417px;width:105px;">27 Nop 2025</div>
<div class="c ar" style="left:221px;top:417px;width:160px;">Penerimaan</div>
<div class="c ar" style="left:384px;top:417px;width:188px;">BCA/KTB/25/342</div>
<div class="c ar" style="left:575px;top:417px;width:513px;white-space:pre"> Jessy Sesilia Halim : Desember Holiday Program 6 class (Mateo Kano Utomo)</div>
<div class="tri" style="left:1089px;top:416px"></div>
<div class="c num" style="left:1094px;top:417px;width:30px;">0,00</div>
<div class="c num" style="left:1124px;top:417px;width:133px;text-align:right;">1.080.000,00</div>
<div class="c num" style="left:1260px;top:417px;width:100px;text-align:right;">-68.524.048,00</div>
<div class="c calo" style="left:1428px;top:417px;width:243px;">desember 2025</div>
<div class="c cal" style="left:1671px;top:417px;width:86px;text-align:right;">1.080.000,00</div>
<div class="c cal" style="left:25px;top:437px;width:85px;text-align:center;padding-left:1px">#VALUE!</div>
<div class="tri" style="left:26px;top:436px"></div>
<div class="c ar" style="left:113px;top:437px;width:105px;">27 Nop 2025</div>
<div class="c ar" style="left:221px;top:437px;width:160px;">Penerimaan</div>
<div class="c ar" style="left:384px;top:437px;width:188px;">BCA/KTB/25/348</div>
<div class="c ar" style="left:575px;top:437px;width:513px;white-space:pre"> Denny Jiang Kianto : Subscription 3 months 1x (Brayden Jiang Kianto)</div>
<div class="tri" style="left:1089px;top:436px"></div>
<div class="c num" style="left:1094px;top:437px;width:30px;">0,00</div>
<div class="c num" style="left:1124px;top:437px;width:133px;text-align:right;">2.258.000,00</div>
<div class="c num" style="left:1260px;top:437px;width:100px;text-align:right;">-70.782.048,00</div>
<div class="c calo" style="left:1428px;top:437px;width:243px;">januari- maret 2026</div>
<div class="c cal" style="left:1671px;top:437px;width:86px;text-align:right;">752.666,67</div>
<div class="c cal" style="left:25px;top:457px;width:83px;text-align:right;">11</div>
<div class="c ar" style="left:113px;top:457px;width:105px;">28/11/2025</div>
<div class="c ar" style="left:221px;top:457px;width:160px;">Penerimaan</div>
<div class="c ar" style="left:384px;top:457px;width:188px;">BCA/KTB/25/349</div>
<div class="c ar" style="left:575px;top:457px;width:513px;white-space:pre"> trial classes</div>
<div class="tri" style="left:1089px;top:456px"></div>
<div class="c num" style="left:1094px;top:457px;width:30px;">0,00</div>
<div class="c num red" style="left:1124px;top:457px;width:133px;text-align:right;">150.000,00</div>
<div class="c num" style="left:1260px;top:457px;width:100px;text-align:right;">-70.932.048,00</div>
<div class="c cal" style="left:25px;top:477px;width:85px;text-align:center;padding-left:1px">#VALUE!</div>
<div class="tri" style="left:26px;top:476px"></div>
<div class="c ar" style="left:113px;top:477px;width:105px;">29 Nop 2025</div>
<div class="c ar" style="left:221px;top:477px;width:160px;">Penerimaan</div>
<div class="c ar" style="left:384px;top:477px;width:188px;">BCA/KTB/25/351</div>
<div class="c ar" style="left:575px;top:477px;width:513px;white-space:pre"> Hariman Kristanto : Subscriotion 3 months 2x (Kylie)</div>
<div class="tri" style="left:1089px;top:476px"></div>
<div class="c num" style="left:1094px;top:477px;width:30px;">0,00</div>
<div class="c num" style="left:1124px;top:477px;width:133px;text-align:right;">4.275.000,00</div>
<div class="c num" style="left:1260px;top:477px;width:100px;text-align:right;">-75.207.048,00</div>
<div class="c calo" style="left:1428px;top:477px;width:243px;">januari - maret 2026</div>
<div class="c cal" style="left:1671px;top:477px;width:86px;text-align:right;">1.425.000,00</div>
<div class="c cal" style="left:25px;top:497px;width:83px;text-align:right;">11</div>
<div class="c ar" style="left:113px;top:497px;width:105px;">29/11/2025</div>
<div class="c ar" style="left:221px;top:497px;width:160px;">Penerimaan</div>
<div class="c ar" style="left:384px;top:497px;width:188px;">BCA/KTB/25/352</div>
<div class="c ar" style="left:575px;top:497px;width:513px;white-space:pre"> Christopher : Trial Multisensory art (Jonathan Kai)</div>
<div class="tri" style="left:1089px;top:496px"></div>
<div class="c num" style="left:1094px;top:497px;width:30px;">0,00</div>
<div class="c num red" style="left:1124px;top:497px;width:133px;text-align:right;">150.000,00</div>
<div class="c num" style="left:1260px;top:497px;width:100px;text-align:right;">-75.357.048,00</div>
<div class="c cal" style="left:25px;top:517px;width:83px;text-align:right;">11</div>
<div class="c ar" style="left:113px;top:517px;width:105px;">29/11/2025</div>
<div class="c ar" style="left:221px;top:517px;width:160px;">Penerimaan</div>
<div class="c ar" style="left:384px;top:517px;width:188px;">BCA/KTB/25/353</div>
<div class="c ar" style="left:575px;top:517px;width:513px;white-space:pre"> Christopher : Trial Lucy Ballet (Jazzlyn Kai)</div>
<div class="tri" style="left:1089px;top:516px"></div>
<div class="c num" style="left:1094px;top:517px;width:30px;">0,00</div>
<div class="c num red" style="left:1124px;top:517px;width:133px;text-align:right;">105.000,00</div>
<div class="c num" style="left:1260px;top:517px;width:100px;text-align:right;">-75.462.048,00</div>
<div class="c cal" style="left:25px;top:537px;width:85px;text-align:center;padding-left:1px">#VALUE!</div>
<div class="tri" style="left:26px;top:536px"></div>
<div class="c ar" style="left:113px;top:537px;width:105px;">29 Nop 2025</div>
<div class="c ar" style="left:221px;top:537px;width:160px;">Penerimaan</div>
<div class="c ar" style="left:384px;top:537px;width:188px;">BCA/KTB/25/354</div>
<div class="c ar" style="left:575px;top:537px;width:513px;white-space:pre"> Lenny : Desember Holiday Program 6 class (Axel Anders Ang)</div>
<div class="tri" style="left:1089px;top:536px"></div>
<div class="c num" style="left:1094px;top:537px;width:30px;">0,00</div>
<div class="c num" style="left:1124px;top:537px;width:133px;text-align:right;">1.080.000,00</div>
<div class="c num" style="left:1260px;top:537px;width:100px;text-align:right;">-76.542.048,00</div>
<div class="c calo" style="left:1428px;top:537px;width:243px;">desember 2026</div>
<div class="c cal" style="left:1671px;top:537px;width:86px;text-align:right;">1.080.000,00</div>
<div class="c cal" style="left:25px;top:557px;width:85px;text-align:center;padding-left:1px">#VALUE!</div>
<div class="tri" style="left:26px;top:556px"></div>
<div class="c ar" style="left:113px;top:557px;width:105px;">29 Nop 2025</div>
<div class="c ar" style="left:221px;top:557px;width:160px;">Penerimaan</div>
<div class="c ar" style="left:384px;top:557px;width:188px;">BCA/KTB/25/355</div>
<div class="c ar" style="left:575px;top:557px;width:513px;white-space:pre"> Lenny : Kika Elective Little Taekwondo 4x (Axel Anders Ang)</div>
<div class="tri" style="left:1089px;top:556px"></div>
<div class="c num" style="left:1094px;top:557px;width:30px;">0,00</div>
<div class="c num" style="left:1124px;top:557px;width:133px;text-align:right;">800.000,00</div>
<div class="c num" style="left:1260px;top:557px;width:100px;text-align:right;">-77.342.048,00</div>
<div class="c calo" style="left:1428px;top:557px;width:243px;">januari 2026</div>
<div class="c cal" style="left:1671px;top:557px;width:86px;text-align:right;">800.000,00</div>
<div class="c cal" style="left:25px;top:577px;width:85px;text-align:center;padding-left:1px">#VALUE!</div>
<div class="tri" style="left:26px;top:576px"></div>
<div class="c ar" style="left:113px;top:577px;width:105px;">29 Nop 2025</div>
<div class="c ar" style="left:221px;top:577px;width:160px;">Penerimaan</div>
<div class="c ar" style="left:384px;top:577px;width:188px;">BCA/KTB/25/356</div>
<div class="c ar" style="left:575px;top:577px;width:513px;white-space:pre"> Nanie : Desember Holiday Program 12 class (Edgar Daytona H)</div>
<div class="tri" style="left:1089px;top:576px"></div>
<div class="c num" style="left:1094px;top:577px;width:30px;">0,00</div>
<div class="c num" style="left:1124px;top:577px;width:133px;text-align:right;">1.985.000,00</div>
<div class="c num" style="left:1260px;top:577px;width:100px;text-align:right;">-79.327.048,00</div>
<div class="c calo" style="left:1428px;top:577px;width:243px;">desember 2025</div>
<div class="c cal" style="left:1671px;top:577px;width:86px;text-align:right;">1.985.000,00</div>
<div class="c cal" style="left:25px;top:597px;width:85px;text-align:center;padding-left:1px">#VALUE!</div>
<div class="tri" style="left:26px;top:596px"></div>
<div class="c ar" style="left:113px;top:597px;width:105px;">29 Nop 2025</div>
<div class="c ar" style="left:221px;top:597px;width:160px;">Penerimaan</div>
<div class="c ar" style="left:384px;top:597px;width:188px;">BCA/KTB/25/357</div>
<div class="c ar" style="left:575px;top:597px;width:513px;white-space:pre"> Dessie Prastica : Desember Holiday Program 6 class (Karl Ethan Santoso)</div>
<div class="tri" style="left:1089px;top:596px"></div>
<div class="c num" style="left:1094px;top:597px;width:30px;">0,00</div>
<div class="c num" style="left:1124px;top:597px;width:133px;text-align:right;">1.080.000,00</div>
<div class="c num" style="left:1260px;top:597px;width:100px;text-align:right;">-80.407.048,00</div>
<div class="c calo" style="left:1428px;top:597px;width:243px;">desember 2025</div>
<div class="c cal" style="left:1671px;top:597px;width:86px;text-align:right;">1.080.000,00</div>
<div class="c cal" style="left:25px;top:617px;width:83px;text-align:right;">11</div>
<div class="c ar" style="left:113px;top:617px;width:105px;">29/11/2025</div>
<div class="c ar" style="left:221px;top:617px;width:160px;">Penerimaan</div>
<div class="c ar" style="left:384px;top:617px;width:188px;">BCA/KTB/25/369</div>
<div class="c ar" style="left:575px;top:617px;width:513px;white-space:pre"> Nicole Valerian : Trial Multisensory art (Jordan)</div>
<div class="tri" style="left:1089px;top:616px"></div>
<div class="c num" style="left:1094px;top:617px;width:30px;">0,00</div>
<div class="c num red" style="left:1124px;top:617px;width:133px;text-align:right;">150.000,00</div>
<div class="c num" style="left:1260px;top:617px;width:100px;text-align:right;">-80.557.048,00</div>
<div class="c cal" style="left:25px;top:637px;width:85px;text-align:center;padding-left:1px">#VALUE!</div>
<div class="tri" style="left:26px;top:636px"></div>
<div class="c ar" style="left:113px;top:637px;width:105px;">29 Nop 2025</div>
<div class="c ar" style="left:221px;top:637px;width:160px;">Penerimaan</div>
<div class="c ar" style="left:384px;top:637px;width:188px;">BCA/KTB/25/370</div>
<div class="c ar" style="left:575px;top:637px;width:513px;white-space:pre"> Rosabella : Subscription 6 months 1x (Ethan Putra Soetadi)</div>
<div class="tri" style="left:1089px;top:636px"></div>
<div class="c num" style="left:1094px;top:637px;width:30px;">0,00</div>
<div class="c num" style="left:1124px;top:637px;width:133px;text-align:right;">3.532.800,00</div>
<div class="c num" style="left:1260px;top:637px;width:100px;text-align:right;">-84.089.848,00</div>
<div class="c calo" style="left:1428px;top:637px;width:243px;">januari - juni 2026</div>
<div class="c cal" style="left:1671px;top:637px;width:86px;text-align:right;">588.800,00</div>
<div class="c cal" style="left:25px;top:657px;width:85px;text-align:center;padding-left:1px">#VALUE!</div>
<div class="tri" style="left:26px;top:656px"></div>
<div class="c ar" style="left:113px;top:657px;width:105px;">30 Nop 2025</div>
<div class="c ar" style="left:221px;top:657px;width:160px;">Penerimaan</div>
<div class="c ar" style="left:384px;top:657px;width:188px;">BCA/KTB/25/371</div>
<div class="c ar" style="left:575px;top:657px;width:513px;white-space:pre"> Felicia Febriana : Subscription 3 months 1x (Kade Eden Suhadi)</div>
<div class="tri" style="left:1089px;top:656px"></div>
<div class="c num" style="left:1094px;top:657px;width:30px;">0,00</div>
<div class="c num" style="left:1124px;top:657px;width:133px;text-align:right;">2.250.000,00</div>
<div class="c num" style="left:1260px;top:657px;width:100px;text-align:right;">-86.339.848,00</div>
<div class="c calo" style="left:1428px;top:657px;width:243px;">januari 2026</div>
<div class="c cal" style="left:1671px;top:657px;width:86px;text-align:right;">2.250.000,00</div>
<div class="tri" style="left:1089px;top:676px"></div>
<div class="a" style="left:1088px;top:675px;width:172px;height:1px;background:#000"></div>
<div class="c num navy" style="left:1094px;top:677px;width:30px;">0,00</div>
<div class="c num navy" style="left:1124px;top:677px;width:133px;text-align:right;">86.339.848,00</div>
<div class="c ar" style="left:389px;top:717px;width:80px;font-size:14px">Masa</div>
<div class="c calo" style="left:477px;top:717px;width:95px;">Bruto</div>
<div class="c ar" style="left:580px;top:717px;width:461px;">PPh 0,5%</div>
<div class="c cal" style="left:381px;top:737px;width:81px;text-align:right;">7,00</div>
<div class="c cal" style="left:469px;top:737px;width:95px;text-align:right;">7.800.088</div>
<div class="c cal" style="left:572px;top:737px;width:462px;text-align:right;">39.000</div>
<div class="c cal" style="left:381px;top:757px;width:81px;text-align:right;">8,00</div>
<div class="c cal" style="left:469px;top:757px;width:95px;text-align:right;">6.400.000</div>
<div class="c cal" style="left:572px;top:757px;width:462px;text-align:right;">32.000</div>
<div class="c cal" style="left:381px;top:777px;width:81px;text-align:right;">9,00</div>
<div class="c cal" style="left:469px;top:777px;width:95px;text-align:right;">2.560.000</div>
<div class="c cal" style="left:572px;top:777px;width:462px;text-align:right;">12.800</div>
<div class="c cal" style="left:381px;top:797px;width:81px;text-align:right;">10,00</div>
<div class="c cal" style="left:469px;top:797px;width:81px;text-align:right;">-</div>
<div class="c cal" style="left:572px;top:797px;width:447px;text-align:right;">-</div>
<div class="c cal" style="left:381px;top:817px;width:81px;text-align:right;">11,00</div>
<div class="c cal" style="left:469px;top:817px;width:95px;text-align:right;">2.750.000</div>
<div class="c cal" style="left:572px;top:817px;width:462px;text-align:right;">13.750</div>
<div class="c cal" style="left:381px;top:837px;width:81px;text-align:right;">12,00</div>
<div class="c cal" style="left:469px;top:837px;width:95px;text-align:right;">88.149.380</div>
<div class="c cal" style="left:572px;top:837px;width:462px;text-align:right;">440.747</div>
<div class="bk" style="left:381px;top:715px;width:661px;height:1px"></div>
<div class="bk" style="left:381px;top:735px;width:661px;height:1px"></div>
<div class="bk" style="left:381px;top:755px;width:661px;height:1px"></div>
<div class="bk" style="left:381px;top:775px;width:661px;height:1px"></div>
<div class="bk" style="left:381px;top:795px;width:661px;height:1px"></div>
<div class="bk" style="left:381px;top:815px;width:661px;height:1px"></div>
<div class="bk" style="left:381px;top:835px;width:661px;height:1px"></div>
<div class="bk" style="left:281px;top:855px;width:761px;height:1px"></div>
<div class="bk" style="left:281px;top:875px;width:761px;height:1px"></div>
<div class="bk" style="left:381px;top:715px;width:1px;height:141px"></div>
<div class="bk" style="left:469px;top:715px;width:1px;height:161px"></div>
<div class="bk" style="left:572px;top:715px;width:1px;height:161px"></div>
<div class="bk" style="left:1041px;top:715px;width:1px;height:161px"></div>
<div class="bk" style="left:281px;top:855px;width:1px;height:21px"></div>
<div class="c cal bold" style="left:281px;top:857px;width:188px;text-align:center">total pendapatan jasa &gt;&gt;&gt;</div>
<div class="c cal bold" style="left:469px;top:857px;width:95px;text-align:right;">107.659.468</div>
<div class="a" style="left:468px;top:814px;width:106px;height:22px;border:2px solid #217346"></div>
<div class="a" style="left:570px;top:833px;width:6px;height:6px;background:#217346;border:1px solid #fff"></div>
<div class="a" style="left:0;top:256px;width:1898px;height:19px;background:#e6e6e6"></div>
<div class="ch" style="left:25px;width:85px;background:#e6e6e6;color:#222">B</div>
<div class="ch" style="left:110px;width:108px;background:#e6e6e6;color:#222">C</div>
<div class="ch" style="left:218px;width:63px;background:#e6e6e6;color:#222">D</div>
<div class="ch" style="left:281px;width:100px;background:#e6e6e6;color:#222">E</div>
<div class="ch" style="left:381px;width:88px;background:#e6e6e6;color:#222">F</div>
<div class="ch" style="left:469px;width:103px;background:#d2d2d2;color:#1e5c3a">G</div>
<div class="ch" style="left:572px;width:469px;background:#e6e6e6;color:#222">H</div>
<div class="ch" style="left:1041px;width:28px;background:#e6e6e6;color:#222">I</div>
<div class="ch" style="left:1069px;width:19px;background:#e6e6e6;color:#222">J</div>
<div class="ch" style="left:1088px;width:36px;background:#e6e6e6;color:#222">K</div>
<div class="ch" style="left:1124px;width:136px;background:#e6e6e6;color:#222">L</div>
<div class="ch" style="left:1260px;width:103px;background:#e6e6e6;color:#222">M</div>
<div class="ch" style="left:1363px;width:62px;background:#e6e6e6;color:#222">N</div>
<div class="ch" style="left:1425px;width:246px;background:#e6e6e6;color:#222">O</div>
<div class="ch" style="left:1671px;width:93px;background:#e6e6e6;color:#222">P</div>
<div class="ch" style="left:1764px;width:64px;background:#e6e6e6;color:#222">Q</div>
<div class="ch" style="left:1828px;width:64px;background:#e6e6e6;color:#222">R</div>
<div class="a" style="left:110px;top:257px;width:1px;height:18px;background:#bdbdbd"></div>
<div class="a" style="left:218px;top:257px;width:1px;height:18px;background:#bdbdbd"></div>
<div class="a" style="left:281px;top:257px;width:1px;height:18px;background:#bdbdbd"></div>
<div class="a" style="left:381px;top:257px;width:1px;height:18px;background:#bdbdbd"></div>
<div class="a" style="left:469px;top:257px;width:1px;height:18px;background:#bdbdbd"></div>
<div class="a" style="left:572px;top:257px;width:1px;height:18px;background:#bdbdbd"></div>
<div class="a" style="left:1041px;top:257px;width:1px;height:18px;background:#bdbdbd"></div>
<div class="a" style="left:1069px;top:257px;width:1px;height:18px;background:#bdbdbd"></div>
<div class="a" style="left:1088px;top:257px;width:1px;height:18px;background:#bdbdbd"></div>
<div class="a" style="left:1124px;top:257px;width:1px;height:18px;background:#bdbdbd"></div>
<div class="a" style="left:1260px;top:257px;width:1px;height:18px;background:#bdbdbd"></div>
<div class="a" style="left:1363px;top:257px;width:1px;height:18px;background:#bdbdbd"></div>
<div class="a" style="left:1425px;top:257px;width:1px;height:18px;background:#bdbdbd"></div>
<div class="a" style="left:1671px;top:257px;width:1px;height:18px;background:#bdbdbd"></div>
<div class="a" style="left:1764px;top:257px;width:1px;height:18px;background:#bdbdbd"></div>
<div class="a" style="left:1828px;top:257px;width:1px;height:18px;background:#bdbdbd"></div>
<div class="a" style="left:1892px;top:257px;width:1px;height:18px;background:#bdbdbd"></div>
<div class="a" style="left:469px;top:273px;width:104px;height:2px;background:#217346"></div>
<div class="a" style="left:0;top:275px;width:1898px;height:1px;background:#a8a8a8"></div>
<div class="a" style="left:1898px;top:275px;width:1px;height:707px;background:#8c8c8c"></div>
<svg class="a" style="left:9px;top:259px" width="14" height="13" viewBox="0 0 14 13"><path d="M13 0.5 V12.5 H1 Z" fill="#b9b9b9"/></svg>
<div class="a" style="left:0;top:276px;width:25px;height:706px;background:#e6e6e6"></div>
<div class="rh" style="top:276px;background:#e6e6e6;color:#22229a">67</div>
<div class="a" style="left:0;top:295px;width:25px;height:1px;background:#c4c4c4"></div>
<div class="rh" style="top:296px;background:#e6e6e6;color:#22229a">68</div>
<div class="a" style="left:0;top:315px;width:25px;height:1px;background:#c4c4c4"></div>
<div class="rh" style="top:316px;background:#e6e6e6;color:#22229a">69</div>
<div class="a" style="left:0;top:335px;width:25px;height:1px;background:#c4c4c4"></div>
<div class="rh" style="top:336px;background:#e6e6e6;color:#22229a">70</div>
<div class="a" style="left:0;top:355px;width:25px;height:1px;background:#c4c4c4"></div>
<div class="rh" style="top:356px;background:#e6e6e6;color:#22229a">71</div>
<div class="a" style="left:0;top:375px;width:25px;height:1px;background:#c4c4c4"></div>
<div class="rh" style="top:376px;background:#e6e6e6;color:#22229a">72</div>
<div class="a" style="left:0;top:395px;width:25px;height:1px;background:#c4c4c4"></div>
<div class="rh" style="top:396px;background:#e6e6e6;color:#22229a">73</div>
<div class="a" style="left:0;top:415px;width:25px;height:1px;background:#c4c4c4"></div>
<div class="rh" style="top:416px;background:#e6e6e6;color:#22229a">74</div>
<div class="a" style="left:0;top:435px;width:25px;height:1px;background:#c4c4c4"></div>
<div class="rh" style="top:436px;background:#e6e6e6;color:#22229a">75</div>
<div class="a" style="left:0;top:455px;width:25px;height:1px;background:#c4c4c4"></div>
<div class="rh" style="top:456px;background:#e6e6e6;color:#22229a">76</div>
<div class="a" style="left:0;top:475px;width:25px;height:1px;background:#c4c4c4"></div>
<div class="rh" style="top:476px;background:#e6e6e6;color:#22229a">77</div>
<div class="a" style="left:0;top:495px;width:25px;height:1px;background:#c4c4c4"></div>
<div class="rh" style="top:496px;background:#e6e6e6;color:#22229a">78</div>
<div class="a" style="left:0;top:515px;width:25px;height:1px;background:#c4c4c4"></div>
<div class="rh" style="top:516px;background:#e6e6e6;color:#22229a">79</div>
<div class="a" style="left:0;top:535px;width:25px;height:1px;background:#c4c4c4"></div>
<div class="rh" style="top:536px;background:#e6e6e6;color:#22229a">80</div>
<div class="a" style="left:0;top:555px;width:25px;height:1px;background:#c4c4c4"></div>
<div class="rh" style="top:556px;background:#e6e6e6;color:#22229a">81</div>
<div class="a" style="left:0;top:575px;width:25px;height:1px;background:#c4c4c4"></div>
<div class="rh" style="top:576px;background:#e6e6e6;color:#22229a">82</div>
<div class="a" style="left:0;top:595px;width:25px;height:1px;background:#c4c4c4"></div>
<div class="rh" style="top:596px;background:#e6e6e6;color:#22229a">83</div>
<div class="a" style="left:0;top:615px;width:25px;height:1px;background:#c4c4c4"></div>
<div class="rh" style="top:616px;background:#e6e6e6;color:#22229a">84</div>
<div class="a" style="left:0;top:635px;width:25px;height:1px;background:#c4c4c4"></div>
<div class="rh" style="top:636px;background:#e6e6e6;color:#22229a">85</div>
<div class="a" style="left:0;top:655px;width:25px;height:1px;background:#c4c4c4"></div>
<div class="rh" style="top:656px;background:#e6e6e6;color:#22229a">86</div>
<div class="a" style="left:0;top:675px;width:25px;height:1px;background:#c4c4c4"></div>
<div class="rh" style="top:676px;background:#e6e6e6;color:#22229a">87</div>
<div class="a" style="left:0;top:695px;width:25px;height:1px;background:#c4c4c4"></div>
<div class="rh" style="top:696px;background:#e6e6e6;color:#22229a">88</div>
<div class="a" style="left:0;top:715px;width:25px;height:1px;background:#c4c4c4"></div>
<div class="rh" style="top:716px;background:#e6e6e6;color:#22229a">89</div>
<div class="a" style="left:0;top:735px;width:25px;height:1px;background:#c4c4c4"></div>
<div class="rh" style="top:736px;background:#e6e6e6;color:#22229a">90</div>
<div class="a" style="left:0;top:755px;width:25px;height:1px;background:#c4c4c4"></div>
<div class="rh" style="top:756px;background:#e6e6e6;color:#22229a">91</div>
<div class="a" style="left:0;top:775px;width:25px;height:1px;background:#c4c4c4"></div>
<div class="rh" style="top:776px;background:#e6e6e6;color:#22229a">92</div>
<div class="a" style="left:0;top:795px;width:25px;height:1px;background:#c4c4c4"></div>
<div class="rh" style="top:796px;background:#e6e6e6;color:#22229a">93</div>
<div class="a" style="left:0;top:815px;width:25px;height:1px;background:#c4c4c4"></div>
<div class="rh" style="top:816px;background:#d2d2d2;color:#22229a">94</div>
<div class="a" style="left:0;top:835px;width:25px;height:1px;background:#c4c4c4"></div>
<div class="rh" style="top:836px;background:#e6e6e6;color:#22229a">95</div>
<div class="a" style="left:0;top:855px;width:25px;height:1px;background:#c4c4c4"></div>
<div class="rh" style="top:856px;background:#e6e6e6;color:#222">96</div>
<div class="a" style="left:0;top:875px;width:25px;height:1px;background:#c4c4c4"></div>
<div class="rh" style="top:876px;background:#e6e6e6;color:#222">97</div>
<div class="a" style="left:0;top:895px;width:25px;height:1px;background:#c4c4c4"></div>
<div class="rh" style="top:896px;background:#e6e6e6;color:#222">98</div>
<div class="a" style="left:0;top:915px;width:25px;height:1px;background:#c4c4c4"></div>
<div class="rh" style="top:916px;background:#e6e6e6;color:#222">99</div>
<div class="a" style="left:0;top:935px;width:25px;height:1px;background:#c4c4c4"></div>
<div class="rh" style="top:936px;background:#e6e6e6;color:#222">100</div>
<div class="a" style="left:0;top:955px;width:25px;height:1px;background:#c4c4c4"></div>
<div class="rh" style="top:956px;background:#e6e6e6;color:#222">101</div>
<div class="a" style="left:0;top:975px;width:25px;height:1px;background:#c4c4c4"></div>
<div class="a" style="left:25px;top:256px;width:1px;height:726px;background:#a8a8a8"></div>
<div class="a" style="left:23px;top:815px;width:2px;height:21px;background:#217346"></div>
<div class="a" style="left:0px;top:982px;width:1920px;height:28px;background:#e6e6e6"></div>
<svg class="a" style="left:25px;top:991px;" width="6" height="9" viewBox="0 0 6 9"><path d="M5 0.5 L1 4.5 L5 8.5 Z" fill="#bdbdbd"/></svg>
<svg class="a" style="left:55px;top:991px;" width="6" height="9" viewBox="0 0 6 9"><path d="M1 0.5 L5 4.5 L1 8.5 Z" fill="#bdbdbd"/></svg>
<div class="a" style="left:100px;top:985px;width:1px;height:22px;background:#b4b4b4"></div>
<div class="t" style="left:113.3px;top:990.60px;font-size:11.7px;color:#444;">TRACKING</div>
<div class="a" style="left:188px;top:982px;width:131px;height:24px;background:#ffffff;border-left:1px solid #c8c8c8;border-right:1px solid #c8c8c8"></div>
<div class="a" style="left:188px;top:1004px;width:131px;height:2px;background:#217346"></div>
<div class="t" style="left:200.5px;top:990.00px;font-size:12.4px;color:#217346;font-weight:bold">Pendapatan Jasa</div>
<svg class="a" style="left:351px;top:987px;" width="18" height="18" viewBox="0 0 18 18"><circle cx="9" cy="9" r="7.5" fill="none" stroke="#666" stroke-width="1.2"/><path d="M9 5 V13 M5 9 H13" stroke="#666" stroke-width="1.3"/></svg>
<div class="a" style="left:1600px;top:989px;width:285px;height:15px;background:#fafafa;border:1px solid #9a9a9a"></div>
<div class="a" style="left:1884px;top:989px;width:15px;height:15px;background:#fff;border:1px solid #9a9a9a"></div>
<svg class="a" style="left:1889px;top:993px;" width="6" height="8" viewBox="0 0 6 8"><path d="M0.5 0.5 L5.5 4 L0.5 7.5 Z" fill="#111"/></svg>
<div class="a" style="left:1899px;top:256px;width:21px;height:726px;background:#efefef"></div>
<div class="a" style="left:1902px;top:258px;width:15px;height:15px;background:#fff;border:1px solid #8a8a8a"></div>
<svg class="a" style="left:1905px;top:262px;" width="9" height="6" viewBox="0 0 9 6"><path d="M0.5 5.5 L4.5 0.8 L8.5 5.5 Z" fill="#111"/></svg>
<div class="a" style="left:1902px;top:729px;width:15px;height:240px;background:#ffffff;border:1px solid #9a9a9a"></div>
<div class="a" style="left:1902px;top:968px;width:15px;height:15px;background:#fff;border:1px solid #9a9a9a"></div>
<svg class="a" style="left:1905px;top:973px;" width="9" height="6" viewBox="0 0 9 6"><path d="M0.5 0.5 L4.5 5.2 L8.5 0.5 Z" fill="#111"/></svg>
<div class="a" style="left:0px;top:982px;width:1899px;height:1px;background:#8c8c8c"></div>
<div class="a" style="left:0px;top:1010px;width:1920px;height:22px;background:#f3f2f1;border-top:1px solid #e1dfdd"></div>
<div class="t" style="left:7.5px;top:1017.03px;font-size:10.6px;color:#444;">Ready</div>
<div class="t" style="left:54.5px;top:1016.18px;font-size:11.6px;color:#444;">Filter Mode</div>
<svg class="a" style="left:132px;top:1014px;" width="16" height="15" viewBox="0 0 16 15"><rect x="0.5" y="0.5" width="13" height="12" fill="none" stroke="#555" stroke-width="1"/><path d="M0.5 3.5 H13.5 M3 6 H6 M3 9 H6" stroke="#555"/><circle cx="11" cy="10" r="3.5" fill="#fff" stroke="#555"/><circle cx="11" cy="10" r="1.2" fill="#555"/></svg>
<svg class="a" style="left:165px;top:1013px;" width="15" height="16" viewBox="0 0 15 16"><circle cx="6" cy="2.5" r="1.8" fill="none" stroke="#555"/><path d="M1 6 L6 5 L11 6 M6 5 V10 L3 15 M6 10 L8 12 M9 10 L14 15 M14 10 L9 15" fill="none" stroke="#555" stroke-width="1.1"/></svg>
<div class="t" style="left:183.3px;top:1016.43px;font-size:11.3px;color:#444;">Accessibility: Investigate</div>
<div class="a" style="left:1620px;top:1011px;width:40px;height:21px;background:#dcdcdc"></div>
<svg class="a" style="left:1632px;top:1015px;" width="17" height="13" viewBox="0 0 17 13"><rect x="0.5" y="0.5" width="16" height="12" fill="none" stroke="#555"/><path d="M0.5 4.5 H16.5 M6 0.5 V12.5 M11 0.5 V12.5" stroke="#555"/></svg>
<svg class="a" style="left:1673px;top:1015px;" width="16" height="13" viewBox="0 0 16 13"><rect x="0.5" y="0.5" width="15" height="12" fill="none" stroke="#555"/><rect x="3.5" y="2.5" width="9" height="8" fill="none" stroke="#555"/></svg>
<svg class="a" style="left:1712px;top:1015px;" width="16" height="13" viewBox="0 0 16 13"><rect x="0.5" y="2.5" width="15" height="10" fill="none" stroke="#555"/><path d="M5 0 V4 M11 0 V4" stroke="#555"/></svg>
<div class="a" style="left:1746px;top:1020px;width:8px;height:1px;background:#555"></div>
<div class="a" style="left:1759px;top:1020px;width:100px;height:1px;background:#777"></div>
<div class="a" style="left:1807px;top:1016px;width:5px;height:10px;background:#444"></div>
<svg class="a" style="left:1862px;top:1015px;" width="11" height="11" viewBox="0 0 11 11"><path d="M5.5 0.5 V10.5 M0.5 5.5 H10.5" stroke="#555" stroke-width="1"/></svg>
<div class="t" style="left:1886px;top:1017.20px;font-size:10.4px;color:#444;">100%</div>
<div class="a" style="left:0px;top:1032px;width:1920px;height:48px;background:linear-gradient(180deg,rgba(60,60,90,0.045),rgba(0,0,0,0) 60%),linear-gradient(90deg,#d8dbeb 0%,#dde1f4 22%,#dadef0 45%,#d5d5e6 70%,#d6d4e4 100%);border-top:1px solid #bfc0cf"></div>
<svg class="a" style="left:17px;top:1044px;" width="28" height="18" viewBox="0 0 28 18"><path d="M6 17 C1 17 1 10 6 10 C7 5 14 4 16 8 C20 6 25 9 24 13 C27 14 26 17 23 17 Z" fill="#cfe3f7" stroke="#a9c6e8" stroke-width="1"/></svg>
<svg class="a" style="left:29px;top:1037px;" width="18" height="18" viewBox="0 0 18 18"><circle cx="9" cy="9" r="8" fill="#d42b2b"/><text x="6" y="13" font-size="10" fill="#fff" font-family="Liberation Sans">1</text></svg>
<div class="t" style="left:50.8px;top:1042.77px;font-size:10.9px;color:#1f1f1f;">29°C</div>
<div class="t" style="left:50.8px;top:1058.02px;font-size:11.2px;color:#444;">Berawan</div>
<svg class="a" style="left:595px;top:1045px;" width="23" height="23" viewBox="0 0 23 23"><defs><linearGradient id="wg" x1="0" y1="0" x2="1" y2="1"><stop offset="0" stop-color="#2fb4f5"/><stop offset="1" stop-color="#0a6fd0"/></linearGradient></defs><rect x="0" y="0" width="11" height="11" fill="url(#wg)"/><rect x="12" y="0" width="11" height="11" fill="url(#wg)"/><rect x="0" y="12" width="11" height="11" fill="url(#wg)"/><rect x="12" y="12" width="11" height="11" fill="url(#wg)"/></svg>
<div class="a" style="left:632px;top:1041px;width:218px;height:31px;background:linear-gradient(90deg,#fbfbfd,#f2f2f8);border:1px solid #e2e2ea;border-radius:16px"></div>
<svg class="a" style="left:642px;top:1047px;" width="17" height="18" viewBox="0 0 17 18"><circle cx="7" cy="7" r="5.5" fill="none" stroke="#222" stroke-width="1.6"/><path d="M11 11 L15.5 15.5" stroke="#222" stroke-width="1.8"/></svg>
<div class="t" style="left:668px;top:1050.42px;font-size:12.85px;color:#555;">Search</div>
<svg class="a" style="left:800px;top:1042px;" width="46" height="29" viewBox="0 0 46 29"><ellipse cx="24" cy="25.5" rx="21" ry="3" fill="#e6cfa2"/><path d="M13 10 C18 8 30 8 35 10 C37 12 36 16 34 17 L33 25 L31.5 25 L31 17 C26 18 21 18 18 17 L17.5 25 L16 25 L15.5 16 C14 15 13.5 13 13 10 Z" fill="#f0f0f0" stroke="#333" stroke-width="0.8"/><path d="M14 11 L8 3 L5 3.5 L3 7 L4.5 8.5 L8 8 L12 14 Z" fill="#eee" stroke="#333" stroke-width="0.8"/><path d="M19 9 V17 M22 8.5 V17 M25 8.5 V17 M28 8.5 V17 M31 9 V16 M10 5 L12.5 9 M7.5 4 L9 6.5" stroke="#333" stroke-width="1.1"/><path d="M35.5 10 L39 17" stroke="#333" stroke-width="1"/><path d="M20 17 L19.5 25 M29 17 L29.5 25" stroke="#333" stroke-width="1.2"/></svg>
<svg class="a" style="left:863px;top:1045px;" width="24" height="23" viewBox="0 0 24 23"><rect x="7" y="0" width="16" height="16" fill="#e8e8e8"/><rect x="0" y="7" width="16" height="16" fill="#1f1f1f"/><rect x="8" y="7" width="8" height="9" fill="#9a9a9a"/></svg>
<svg class="a" style="left:907px;top:1044px;" width="25" height="25" viewBox="0 0 25 25"><path d="M12.5 1.5 A11 11 0 1 1 5 21 L1.5 23.5 L3 19 A11 11 0 0 1 12.5 1.5 Z" fill="#fff" stroke="#25a244" stroke-width="2.2"/><path d="M8 8 C8 13 12 17 17 17 L18 15 L15.5 13.5 L14 15 C12 14 11 13 10 11 L11.5 9.5 L10 7 Z" fill="#25a244"/></svg>
<div class="a" style="left:916px;top:1072px;width:7px;height:2px;background:#8a8a92;border-radius:1px"></div>
<svg class="a" style="left:950px;top:1044px;" width="26" height="26" viewBox="0 0 26 26"><defs><linearGradient id="eg" x1="0" y1="0" x2="1" y2="1"><stop offset="0" stop-color="#35c1f1"/><stop offset="0.6" stop-color="#1b8bd6"/><stop offset="1" stop-color="#52c160"/></linearGradient></defs><circle cx="13" cy="13" r="12.5" fill="url(#eg)"/><path d="M6 15 C6 9 12 7 16 9 C19 10.5 19 14 16 14 L9 14 C9 18 14 21 20 19 C17 24 7 23 6 15 Z" fill="#fff" opacity="0.9"/></svg>
<svg class="a" style="left:993px;top:1045px;" width="26" height="22" viewBox="0 0 26 22"><path d="M1 3 H10 L12 5 H25 V21 H1 Z" fill="#f7c23a"/><rect x="1" y="7" width="24" height="14" fill="#ffd85a"/><rect x="7" y="14" width="12" height="7" fill="#1d79d0"/></svg>
<div class="a" style="left:1003px;top:1072px;width:7px;height:2px;background:#8a8a92;border-radius:1px"></div>
<svg class="a" style="left:1039px;top:1044px;" width="26" height="26" viewBox="0 0 26 26"><circle cx="13" cy="13" r="12.5" fill="#db4437"/><path d="M13 13 L2.2 19.2 A12.5 12.5 0 0 0 19.3 23.8 Z" fill="#0f9d58"/><path d="M13 13 L19.3 23.8 A12.5 12.5 0 0 0 24.8 9 L13 9 Z" fill="#f4b400"/><circle cx="13" cy="13" r="5.5" fill="#fff"/><circle cx="13" cy="13" r="4.3" fill="#4285f4"/></svg>
<svg class="a" style="left:1053px;top:1037px;" width="12" height="12" viewBox="0 0 12 12"><circle cx="6" cy="6" r="5.5" fill="#c5221f"/><text x="3.5" y="9" font-size="7" fill="#fff" font-family="Liberation Sans">8</text></svg>
<svg class="a" style="left:1083px;top:1044px;" width="25" height="25" viewBox="0 0 25 25"><circle cx="12.5" cy="12.5" r="12" fill="#1ed760"/><path d="M6 9 C10 7.5 15 8 19 10 M7 12.5 C10.5 11.5 14.5 12 17.5 13.5 M8 16 C11 15 14 15.5 16 16.5" fill="none" stroke="#111" stroke-width="1.8" stroke-linecap="round"/></svg>
<div class="a" style="left:1091px;top:1072px;width:7px;height:2px;background:#8a8a92;border-radius:1px"></div>
<svg class="a" style="left:1128px;top:1044px;" width="24" height="26" viewBox="0 0 24 26"><rect x="1" y="1" width="13" height="13" fill="none" stroke="#e05050" stroke-width="2" stroke-dasharray="2 1.5"/><circle cx="9" cy="21" r="2.5" fill="none" stroke="#2c7bd6" stroke-width="1.5"/><circle cx="19" cy="15" r="2.5" fill="none" stroke="#2c7bd6" stroke-width="1.5"/><path d="M11 19 L21 8 M16 16 L7 9" stroke="#2c7bd6" stroke-width="1.4"/></svg>
<svg class="a" style="left:1172px;top:1044px;" width="24" height="25" viewBox="0 0 24 25"><circle cx="12" cy="12.5" r="12" fill="#e5484d"/><path d="M7 18 L12 6 L17 18" fill="none" stroke="#fff" stroke-width="2.2"/></svg>
<div class="a" style="left:1180px;top:1072px;width:7px;height:2px;background:#8a8a92;border-radius:1px"></div>
<div class="a" style="left:1209px;top:1036px;width:37px;height:40px;background:rgba(255,255,255,0.55);border-radius:4px"></div>
<svg class="a" style="left:1215px;top:1044px;" width="25" height="24" viewBox="0 0 25 24"><rect x="7" y="0" width="18" height="24" rx="2" fill="#21a366"/><rect x="7" y="8" width="18" height="8" fill="#107c41"/><rect x="7" y="16" width="18" height="8" fill="#185c37"/><rect x="16" y="0" width="9" height="24" fill="#33c481" opacity="0.6"/><rect x="0" y="5" width="13" height="14" rx="1.5" fill="#107c41"/><path d="M3.5 8 L9.5 16 M9.5 8 L3.5 16" stroke="#fff" stroke-width="1.8"/></svg>
<div class="a" style="left:1219px;top:1072px;width:15px;height:3px;background:#0067c0;border-radius:2px"></div>
<svg class="a" style="left:1259px;top:1044px;" width="26" height="26" viewBox="0 0 26 26"><circle cx="13" cy="13" r="12.5" fill="#db4437"/><path d="M13 13 L2.2 19.2 A12.5 12.5 0 0 0 19.3 23.8 Z" fill="#0f9d58"/><path d="M13 13 L19.3 23.8 A12.5 12.5 0 0 0 24.8 9 L13 9 Z" fill="#f4b400"/><circle cx="13" cy="13" r="5.5" fill="#fff"/><circle cx="13" cy="13" r="4.3" fill="#4285f4"/></svg>
<div class="a" style="left:1297px;top:1036px;width:37px;height:40px;background:rgba(255,255,255,0.55);border-radius:4px"></div>
<svg class="a" style="left:1302px;top:1044px;" width="26" height="25" viewBox="0 0 26 25"><rect x="0" y="0" width="26" height="25" rx="4" fill="#b30b00"/><path d="M5 19 C9 14 12 8 13 5 C14 3 15 5 14 8 C12 13 8 18 6 19 C9 17 16 15 21 16 C23 16.5 22 18 20 17.5 C16 16 12 11 11 9" fill="none" stroke="#fff" stroke-width="1.5"/></svg>
<div class="a" style="left:1312px;top:1072px;width:7px;height:2px;background:#8a8a92;border-radius:1px"></div>
<svg class="a" style="left:1729px;top:1050px;" width="12" height="7" viewBox="0 0 12 7"><path d="M0.8 6.2 L6 1 L11.2 6.2" fill="none" stroke="#222" stroke-width="1.3"/></svg>
<svg class="a" style="left:1757px;top:1047px;" width="17" height="13" viewBox="0 0 17 13"><path d="M1 4.5 C5 0.5 12 0.5 16 4.5 M3.5 7 C6.5 4 10.5 4 13.5 7 M6 9.5 C7.5 8 9.5 8 11 9.5" fill="none" stroke="#222" stroke-width="1.3"/><circle cx="8.5" cy="11.5" r="1.3" fill="#222"/></svg>
<svg class="a" style="left:1781px;top:1047px;" width="16" height="14" viewBox="0 0 16 14"><path d="M1 5 H4 L8 1.5 V12.5 L4 9 H1 Z" fill="none" stroke="#222" stroke-width="1.1"/><path d="M10.5 4.5 C11.5 5.5 11.5 8.5 10.5 9.5 M12.5 2.5 C14.5 4.5 14.5 9.5 12.5 11.5" fill="none" stroke="#222" stroke-width="1.1"/></svg>
<div class="t" style="left:1849px;top:1042.27px;font-size:11.5px;color:#1f1f1f;">11:32</div>
<div class="t" style="left:1816px;top:1057.74px;font-size:12px;color:#1f1f1f;">31/01/2026</div>
<svg class="a" style="left:1885px;top:1047px;" width="17" height="18" viewBox="0 0 17 18"><path d="M3 13 V8 C3 4.5 5.5 2.5 8.5 2.5 C11.5 2.5 14 4.5 14 8 V13 L15.5 14.5 H1.5 Z" fill="#222"/><path d="M6.5 16 C7 17.5 10 17.5 10.5 16" fill="#222" stroke="#222"/><text x="5.5" y="11" font-size="6" fill="#fff" font-family="Liberation Sans">z</text><text x="11" y="5" font-size="6" fill="#222" font-family="Liberation Sans" font-weight="bold">z</text></svg>
<div class="a" style="left:774px;top:866px;width:1080px;height:154px;background:#fafafa;border-radius:8px;box-shadow:0 4px 16px rgba(0,0,0,0.20);border:1px solid #ebebeb"></div>
<svg class="a" style="left:784px;top:877px;" width="13" height="16" viewBox="0 0 13 16"><path d="M1 1 H8.5 L12 4.5 V15 H1 Z" fill="#fff" stroke="#d8312a" stroke-width="1.3"/><path d="M3 12 C5 9 6.5 6 7 4.5 C7.5 3.5 8 4.5 7.5 6 C6.5 8.5 4.5 11 3.5 12 C5 11 8 10 10 10.5" fill="none" stroke="#d8312a" stroke-width="0.9"/></svg>
<div class="t" style="left:806px;top:879.39px;font-size:11.0px;color:#1f1f1f;">KTB BILLING PPH UMKM 0725....</div>
<div class="a" style="left:783px;top:904px;width:200px;height:109px;background:#ffffff"></div>
<div class="a" style="left:783px;top:904px;width:200px;height:5px;background:#f6f6f6"></div>
<div class="a" style="left:786px;top:905px;width:22px;height:2px;background:#d6d6d6"></div>
<div class="a" style="left:903px;top:905px;width:20px;height:2px;background:#dedede"></div>
<div class="a" style="left:948px;top:905px;width:8px;height:4px;background:#3a3a3a;border-radius:2px"></div>
<div class="a" style="left:957px;top:905px;width:15px;height:4px;background:#d68bd8;border-radius:2px"></div>
<div class="a" style="left:812px;top:910px;width:37px;height:103px;background:#f6f6f6"></div>
<div class="a" style="left:944px;top:910px;width:31px;height:103px;background:#f6f6f6"></div>
<div class="a" style="left:975px;top:910px;width:1px;height:98px;background:#d0d0d0"></div>
<div class="a" style="left:786px;top:913px;width:12px;height:2px;background:#bbbbbb"></div>
<div class="a" style="left:788px;top:919px;width:2px;height:2px;background:#d4d4d4"></div>
<div class="a" style="left:792px;top:919px;width:8px;height:1px;background:#dcdcdc"></div>
<div class="a" style="left:788px;top:923px;width:2px;height:2px;background:#d4d4d4"></div>
<div class="a" style="left:792px;top:923px;width:13px;height:1px;background:#dcdcdc"></div>
<div class="a" style="left:788px;top:927px;width:2px;height:2px;background:#d4d4d4"></div>
<div class="a" style="left:792px;top:927px;width:9px;height:1px;background:#dcdcdc"></div>
<div class="a" style="left:788px;top:931px;width:2px;height:2px;background:#d4d4d4"></div>
<div class="a" style="left:792px;top:931px;width:14px;height:1px;background:#dcdcdc"></div>
<div class="a" style="left:788px;top:935px;width:2px;height:2px;background:#d4d4d4"></div>
<div class="a" style="left:792px;top:935px;width:10px;height:1px;background:#dcdcdc"></div>
<div class="a" style="left:788px;top:939px;width:2px;height:2px;background:#d4d4d4"></div>
<div class="a" style="left:792px;top:939px;width:15px;height:1px;background:#dcdcdc"></div>
<div class="a" style="left:788px;top:943px;width:2px;height:2px;background:#d4d4d4"></div>
<div class="a" style="left:792px;top:943px;width:11px;height:1px;background:#dcdcdc"></div>
<div class="a" style="left:788px;top:947px;width:2px;height:2px;background:#d4d4d4"></div>
<div class="a" style="left:792px;top:947px;width:16px;height:1px;background:#dcdcdc"></div>
<div class="a" style="left:788px;top:951px;width:2px;height:2px;background:#d4d4d4"></div>
<div class="a" style="left:792px;top:951px;width:12px;height:1px;background:#dcdcdc"></div>
<div class="a" style="left:788px;top:955px;width:2px;height:2px;background:#d4d4d4"></div>
<div class="a" style="left:792px;top:955px;width:8px;height:1px;background:#dcdcdc"></div>
<div class="a" style="left:788px;top:959px;width:2px;height:2px;background:#d4d4d4"></div>
<div class="a" style="left:792px;top:959px;width:13px;height:1px;background:#dcdcdc"></div>
<div class="a" style="left:788px;top:963px;width:2px;height:2px;background:#d4d4d4"></div>
<div class="a" style="left:792px;top:963px;width:9px;height:1px;background:#dcdcdc"></div>
<div class="a" style="left:788px;top:967px;width:2px;height:2px;background:#d4d4d4"></div>
<div class="a" style="left:792px;top:967px;width:14px;height:1px;background:#dcdcdc"></div>
<div class="a" style="left:802px;top:919px;width:5px;height:2px;background:#7b9fd8"></div>
<div class="a" style="left:793px;top:1005px;width:8px;height:3px;background:#2f6fd6;border-radius:2px"></div>
<div class="a" style="left:789px;top:1001px;width:16px;height:1px;background:#e6c98a"></div>
<div class="a" style="left:977px;top:914px;width:3px;height:3px;background:#cfcfcf"></div>
<div class="a" style="left:977px;top:919px;width:3px;height:3px;background:#cfcfcf"></div>
<div class="a" style="left:977px;top:924px;width:3px;height:3px;background:#cfcfcf"></div>
<div class="a" style="left:977px;top:929px;width:3px;height:3px;background:#cfcfcf"></div>
<div class="a" style="left:977px;top:995px;width:3px;height:3px;background:#cfcfcf"></div>
<div class="a" style="left:977px;top:1000px;width:3px;height:3px;background:#cfcfcf"></div>
<div class="a" style="left:977px;top:1005px;width:3px;height:3px;background:#cfcfcf"></div>
<div class="a" style="left:862px;top:915px;width:6px;height:6px;background:#8a8a8a;border-radius:3px"></div>
<div class="a" style="left:871px;top:916px;width:22px;height:1px;background:#a8a8a8"></div>
<div class="a" style="left:871px;top:919px;width:24px;height:1px;background:#b8b8b8"></div>
<div class="a" style="left:904px;top:914px;width:31px;height:8px;border:1px solid #d8d8d8"></div>
<div class="a" style="left:912px;top:916px;width:20px;height:1px;background:#a0a0a0"></div>
<div class="a" style="left:911px;top:919px;width:22px;height:1px;background:#707070"></div>
<div class="a" style="left:861px;top:924px;width:8px;height:1px;background:#b0b0b0"></div>
<div class="a" style="left:876px;top:924px;width:14px;height:1px;background:#bdbdbd"></div>
<div class="a" style="left:861px;top:927px;width:8px;height:1px;background:#b0b0b0"></div>
<div class="a" style="left:876px;top:927px;width:22px;height:1px;background:#bdbdbd"></div>
<div class="a" style="left:861px;top:930px;width:8px;height:1px;background:#b0b0b0"></div>
<div class="a" style="left:876px;top:930px;width:45px;height:1px;background:#bdbdbd"></div>
<div class="a" style="left:861px;top:933px;width:8px;height:1px;background:#b0b0b0"></div>
<div class="a" style="left:876px;top:933px;width:44px;height:1px;background:#bdbdbd"></div>
<div class="a" style="left:861px;top:936px;width:8px;height:1px;background:#b0b0b0"></div>
<div class="a" style="left:876px;top:936px;width:6px;height:1px;background:#bdbdbd"></div>
<div class="a" style="left:861px;top:939px;width:8px;height:1px;background:#b0b0b0"></div>
<div class="a" style="left:876px;top:939px;width:10px;height:1px;background:#bdbdbd"></div>
<div class="a" style="left:861px;top:942px;width:8px;height:1px;background:#b0b0b0"></div>
<div class="a" style="left:876px;top:942px;width:2px;height:1px;background:#bdbdbd"></div>
<div class="a" style="left:861px;top:948px;width:14px;height:1px;background:#9a9a9a"></div>
<div class="a" style="left:861px;top:950px;width:73px;height:6px;background:#f7c21a"></div>
<div class="a" style="left:861px;top:958px;width:73px;height:1px;background:#e4e4e4"></div>
<div class="a" style="left:861px;top:961px;width:73px;height:5px;background:#f7c21a"></div>
<div class="a" style="left:864px;top:968px;width:25px;height:1px;background:#b8b8d8"></div>
<div class="a" style="left:861px;top:974px;width:7px;height:1px;background:#b0b0b0"></div>
<div class="a" style="left:861px;top:976px;width:24px;height:1px;background:#a8a8a8"></div>
<div class="a" style="left:861px;top:982px;width:34px;height:1px;background:#9a9a9a"></div>
<div class="a" style="left:861px;top:984px;width:34px;height:1px;background:#a8a8a8"></div>
<div class="a" style="left:861px;top:988px;width:12px;height:1px;background:#a8a8a8"></div>
<div class="a" style="left:880px;top:988px;width:16px;height:1px;background:#b0b0b0"></div>
<div class="a" style="left:861px;top:991px;width:12px;height:1px;background:#a8a8a8"></div>
<div class="a" style="left:880px;top:991px;width:16px;height:1px;background:#b0b0b0"></div>
<svg class="a" style="left:919px;top:982px;" width="10" height="10" viewBox="0 0 10 10"><rect width="10" height="10" fill="#6a6a6a"/><rect x="1" y="1" width="3" height="3" fill="#fff"/><rect x="6" y="1" width="3" height="3" fill="#fff"/><rect x="1" y="6" width="3" height="3" fill="#fff"/><rect x="5" y="5" width="2" height="2" fill="#ddd"/></svg>
<svg class="a" style="left:1000px;top:877px;" width="13" height="16" viewBox="0 0 13 16"><path d="M1 1 H8.5 L12 4.5 V15 H1 Z" fill="#fff" stroke="#d8312a" stroke-width="1.3"/><path d="M3 12 C5 9 6.5 6 7 4.5 C7.5 3.5 8 4.5 7.5 6 C6.5 8.5 4.5 11 3.5 12 C5 11 8 10 10 10.5" fill="none" stroke="#d8312a" stroke-width="0.9"/></svg>
<div class="t" style="left:1022px;top:879.39px;font-size:11.0px;color:#1f1f1f;">KTB BILLING PPH UMKM 0825....</div>
<div class="a" style="left:999px;top:904px;width:200px;height:109px;background:#ffffff"></div>
<div class="a" style="left:999px;top:904px;width:200px;height:5px;background:#f6f6f6"></div>
<div class="a" style="left:1002px;top:905px;width:22px;height:2px;background:#d6d6d6"></div>
<div class="a" style="left:1119px;top:905px;width:20px;height:2px;background:#dedede"></div>
<div class="a" style="left:1164px;top:905px;width:8px;height:4px;background:#3a3a3a;border-radius:2px"></div>
<div class="a" style="left:1173px;top:905px;width:15px;height:4px;background:#d68bd8;border-radius:2px"></div>
<div class="a" style="left:1028px;top:910px;width:37px;height:103px;background:#f6f6f6"></div>
<div class="a" style="left:1160px;top:910px;width:31px;height:103px;background:#f6f6f6"></div>
<div class="a" style="left:1191px;top:910px;width:1px;height:98px;background:#d0d0d0"></div>
<div class="a" style="left:1002px;top:913px;width:12px;height:2px;background:#bbbbbb"></div>
<div class="a" style="left:1004px;top:919px;width:2px;height:2px;background:#d4d4d4"></div>
<div class="a" style="left:1008px;top:919px;width:8px;height:1px;background:#dcdcdc"></div>
<div class="a" style="left:1004px;top:923px;width:2px;height:2px;background:#d4d4d4"></div>
<div class="a" style="left:1008px;top:923px;width:13px;height:1px;background:#dcdcdc"></div>
<div class="a" style="left:1004px;top:927px;width:2px;height:2px;background:#d4d4d4"></div>
<div class="a" style="left:1008px;top:927px;width:9px;height:1px;background:#dcdcdc"></div>
<div class="a" style="left:1004px;top:931px;width:2px;height:2px;background:#d4d4d4"></div>
<div class="a" style="left:1008px;top:931px;width:14px;height:1px;background:#dcdcdc"></div>
<div class="a" style="left:1004px;top:935px;width:2px;height:2px;background:#d4d4d4"></div>
<div class="a" style="left:1008px;top:935px;width:10px;height:1px;background:#dcdcdc"></div>
<div class="a" style="left:1004px;top:939px;width:2px;height:2px;background:#d4d4d4"></div>
<div class="a" style="left:1008px;top:939px;width:15px;height:1px;background:#dcdcdc"></div>
<div class="a" style="left:1004px;top:943px;width:2px;height:2px;background:#d4d4d4"></div>
<div class="a" style="left:1008px;top:943px;width:11px;height:1px;background:#dcdcdc"></div>
<div class="a" style="left:1004px;top:947px;width:2px;height:2px;background:#d4d4d4"></div>
<div class="a" style="left:1008px;top:947px;width:16px;height:1px;background:#dcdcdc"></div>
<div class="a" style="left:1004px;top:951px;width:2px;height:2px;background:#d4d4d4"></div>
<div class="a" style="left:1008px;top:951px;width:12px;height:1px;background:#dcdcdc"></div>
<div class="a" style="left:1004px;top:955px;width:2px;height:2px;background:#d4d4d4"></div>
<div class="a" style="left:1008px;top:955px;width:8px;height:1px;background:#dcdcdc"></div>
<div class="a" style="left:1004px;top:959px;width:2px;height:2px;background:#d4d4d4"></div>
<div class="a" style="left:1008px;top:959px;width:13px;height:1px;background:#dcdcdc"></div>
<div class="a" style="left:1004px;top:963px;width:2px;height:2px;background:#d4d4d4"></div>
<div class="a" style="left:1008px;top:963px;width:9px;height:1px;background:#dcdcdc"></div>
<div class="a" style="left:1004px;top:967px;width:2px;height:2px;background:#d4d4d4"></div>
<div class="a" style="left:1008px;top:967px;width:14px;height:1px;background:#dcdcdc"></div>
<div class="a" style="left:1018px;top:919px;width:5px;height:2px;background:#7b9fd8"></div>
<div class="a" style="left:1009px;top:1005px;width:8px;height:3px;background:#2f6fd6;border-radius:2px"></div>
<div class="a" style="left:1005px;top:1001px;width:16px;height:1px;background:#e6c98a"></div>
<div class="a" style="left:1193px;top:914px;width:3px;height:3px;background:#cfcfcf"></div>
<div class="a" style="left:1193px;top:919px;width:3px;height:3px;background:#cfcfcf"></div>
<div class="a" style="left:1193px;top:924px;width:3px;height:3px;background:#cfcfcf"></div>
<div class="a" style="left:1193px;top:929px;width:3px;height:3px;background:#cfcfcf"></div>
<div class="a" style="left:1193px;top:995px;width:3px;height:3px;background:#cfcfcf"></div>
<div class="a" style="left:1193px;top:1000px;width:3px;height:3px;background:#cfcfcf"></div>
<div class="a" style="left:1193px;top:1005px;width:3px;height:3px;background:#cfcfcf"></div>
<div class="a" style="left:1078px;top:915px;width:6px;height:6px;background:#8a8a8a;border-radius:3px"></div>
<div class="a" style="left:1087px;top:916px;width:22px;height:1px;background:#a8a8a8"></div>
<div class="a" style="left:1087px;top:919px;width:24px;height:1px;background:#b8b8b8"></div>
<div class="a" style="left:1120px;top:914px;width:31px;height:8px;border:1px solid #d8d8d8"></div>
<div class="a" style="left:1128px;top:916px;width:20px;height:1px;background:#a0a0a0"></div>
<div class="a" style="left:1127px;top:919px;width:22px;height:1px;background:#707070"></div>
<div class="a" style="left:1077px;top:924px;width:8px;height:1px;background:#b0b0b0"></div>
<div class="a" style="left:1092px;top:924px;width:14px;height:1px;background:#bdbdbd"></div>
<div class="a" style="left:1077px;top:927px;width:8px;height:1px;background:#b0b0b0"></div>
<div class="a" style="left:1092px;top:927px;width:22px;height:1px;background:#bdbdbd"></div>
<div class="a" style="left:1077px;top:930px;width:8px;height:1px;background:#b0b0b0"></div>
<div class="a" style="left:1092px;top:930px;width:45px;height:1px;background:#bdbdbd"></div>
<div class="a" style="left:1077px;top:933px;width:8px;height:1px;background:#b0b0b0"></div>
<div class="a" style="left:1092px;top:933px;width:44px;height:1px;background:#bdbdbd"></div>
<div class="a" style="left:1077px;top:936px;width:8px;height:1px;background:#b0b0b0"></div>
<div class="a" style="left:1092px;top:936px;width:6px;height:1px;background:#bdbdbd"></div>
<div class="a" style="left:1077px;top:939px;width:8px;height:1px;background:#b0b0b0"></div>
<div class="a" style="left:1092px;top:939px;width:10px;height:1px;background:#bdbdbd"></div>
<div class="a" style="left:1077px;top:942px;width:8px;height:1px;background:#b0b0b0"></div>
<div class="a" style="left:1092px;top:942px;width:2px;height:1px;background:#bdbdbd"></div>
<div class="a" style="left:1077px;top:948px;width:14px;height:1px;background:#9a9a9a"></div>
<div class="a" style="left:1077px;top:950px;width:73px;height:6px;background:#f7c21a"></div>
<div class="a" style="left:1077px;top:958px;width:73px;height:1px;background:#e4e4e4"></div>
<div class="a" style="left:1077px;top:961px;width:73px;height:5px;background:#f7c21a"></div>
<div class="a" style="left:1080px;top:968px;width:25px;height:1px;background:#b8b8d8"></div>
<div class="a" style="left:1077px;top:974px;width:7px;height:1px;background:#b0b0b0"></div>
<div class="a" style="left:1077px;top:976px;width:24px;height:1px;background:#a8a8a8"></div>
<div class="a" style="left:1077px;top:982px;width:34px;height:1px;background:#9a9a9a"></div>
<div class="a" style="left:1077px;top:984px;width:34px;height:1px;background:#a8a8a8"></div>
<div class="a" style="left:1077px;top:988px;width:12px;height:1px;background:#a8a8a8"></div>
<div class="a" style="left:1096px;top:988px;width:16px;height:1px;background:#b0b0b0"></div>
<div class="a" style="left:1077px;top:991px;width:12px;height:1px;background:#a8a8a8"></div>
<div class="a" style="left:1096px;top:991px;width:16px;height:1px;background:#b0b0b0"></div>
<svg class="a" style="left:1135px;top:982px;" width="10" height="10" viewBox="0 0 10 10"><rect width="10" height="10" fill="#6a6a6a"/><rect x="1" y="1" width="3" height="3" fill="#fff"/><rect x="6" y="1" width="3" height="3" fill="#fff"/><rect x="1" y="6" width="3" height="3" fill="#fff"/><rect x="5" y="5" width="2" height="2" fill="#ddd"/></svg>
<svg class="a" style="left:1216px;top:877px;" width="13" height="16" viewBox="0 0 13 16"><path d="M1 1 H8.5 L12 4.5 V15 H1 Z" fill="#fff" stroke="#d8312a" stroke-width="1.3"/><path d="M3 12 C5 9 6.5 6 7 4.5 C7.5 3.5 8 4.5 7.5 6 C6.5 8.5 4.5 11 3.5 12 C5 11 8 10 10 10.5" fill="none" stroke="#d8312a" stroke-width="0.9"/></svg>
<div class="t" style="left:1238px;top:879.39px;font-size:11.0px;color:#1f1f1f;">KTB BILLING PPH UMKM 0925....</div>
<div class="a" style="left:1215px;top:904px;width:200px;height:109px;background:#ffffff"></div>
<div class="a" style="left:1215px;top:904px;width:200px;height:5px;background:#f6f6f6"></div>
<div class="a" style="left:1218px;top:905px;width:22px;height:2px;background:#d6d6d6"></div>
<div class="a" style="left:1335px;top:905px;width:20px;height:2px;background:#dedede"></div>
<div class="a" style="left:1380px;top:905px;width:8px;height:4px;background:#3a3a3a;border-radius:2px"></div>
<div class="a" style="left:1389px;top:905px;width:15px;height:4px;background:#d68bd8;border-radius:2px"></div>
<div class="a" style="left:1244px;top:910px;width:37px;height:103px;background:#f6f6f6"></div>
<div class="a" style="left:1376px;top:910px;width:31px;height:103px;background:#f6f6f6"></div>
<div class="a" style="left:1407px;top:910px;width:1px;height:98px;background:#d0d0d0"></div>
<div class="a" style="left:1218px;top:913px;width:12px;height:2px;background:#bbbbbb"></div>
<div class="a" style="left:1220px;top:919px;width:2px;height:2px;background:#d4d4d4"></div>
<div class="a" style="left:1224px;top:919px;width:8px;height:1px;background:#dcdcdc"></div>
<div class="a" style="left:1220px;top:923px;width:2px;height:2px;background:#d4d4d4"></div>
<div class="a" style="left:1224px;top:923px;width:13px;height:1px;background:#dcdcdc"></div>
<div class="a" style="left:1220px;top:927px;width:2px;height:2px;background:#d4d4d4"></div>
<div class="a" style="left:1224px;top:927px;width:9px;height:1px;background:#dcdcdc"></div>
<div class="a" style="left:1220px;top:931px;width:2px;height:2px;background:#d4d4d4"></div>
<div class="a" style="left:1224px;top:931px;width:14px;height:1px;background:#dcdcdc"></div>
<div class="a" style="left:1220px;top:935px;width:2px;height:2px;background:#d4d4d4"></div>
<div class="a" style="left:1224px;top:935px;width:10px;height:1px;background:#dcdcdc"></div>
<div class="a" style="left:1220px;top:939px;width:2px;height:2px;background:#d4d4d4"></div>
<div class="a" style="left:1224px;top:939px;width:15px;height:1px;background:#dcdcdc"></div>
<div class="a" style="left:1220px;top:943px;width:2px;height:2px;background:#d4d4d4"></div>
<div class="a" style="left:1224px;top:943px;width:11px;height:1px;background:#dcdcdc"></div>
<div class="a" style="left:1220px;top:947px;width:2px;height:2px;background:#d4d4d4"></div>
<div class="a" style="left:1224px;top:947px;width:16px;height:1px;background:#dcdcdc"></div>
<div class="a" style="left:1220px;top:951px;width:2px;height:2px;background:#d4d4d4"></div>
<div class="a" style="left:1224px;top:951px;width:12px;height:1px;background:#dcdcdc"></div>
<div class="a" style="left:1220px;top:955px;width:2px;height:2px;background:#d4d4d4"></div>
<div class="a" style="left:1224px;top:955px;width:8px;height:1px;background:#dcdcdc"></div>
<div class="a" style="left:1220px;top:959px;width:2px;height:2px;background:#d4d4d4"></div>
<div class="a" style="left:1224px;top:959px;width:13px;height:1px;background:#dcdcdc"></div>
<div class="a" style="left:1220px;top:963px;width:2px;height:2px;background:#d4d4d4"></div>
<div class="a" style="left:1224px;top:963px;width:9px;height:1px;background:#dcdcdc"></div>
<div class="a" style="left:1220px;top:967px;width:2px;height:2px;background:#d4d4d4"></div>
<div class="a" style="left:1224px;top:967px;width:14px;height:1px;background:#dcdcdc"></div>
<div class="a" style="left:1234px;top:919px;width:5px;height:2px;background:#7b9fd8"></div>
<div class="a" style="left:1225px;top:1005px;width:8px;height:3px;background:#2f6fd6;border-radius:2px"></div>
<div class="a" style="left:1221px;top:1001px;width:16px;height:1px;background:#e6c98a"></div>
<div class="a" style="left:1409px;top:914px;width:3px;height:3px;background:#cfcfcf"></div>
<div class="a" style="left:1409px;top:919px;width:3px;height:3px;background:#cfcfcf"></div>
<div class="a" style="left:1409px;top:924px;width:3px;height:3px;background:#cfcfcf"></div>
<div class="a" style="left:1409px;top:929px;width:3px;height:3px;background:#cfcfcf"></div>
<div class="a" style="left:1409px;top:995px;width:3px;height:3px;background:#cfcfcf"></div>
<div class="a" style="left:1409px;top:1000px;width:3px;height:3px;background:#cfcfcf"></div>
<div class="a" style="left:1409px;top:1005px;width:3px;height:3px;background:#cfcfcf"></div>
<div class="a" style="left:1294px;top:915px;width:6px;height:6px;background:#8a8a8a;border-radius:3px"></div>
<div class="a" style="left:1303px;top:916px;width:22px;height:1px;background:#a8a8a8"></div>
<div class="a" style="left:1303px;top:919px;width:24px;height:1px;background:#b8b8b8"></div>
<div class="a" style="left:1336px;top:914px;width:31px;height:8px;border:1px solid #d8d8d8"></div>
<div class="a" style="left:1344px;top:916px;width:20px;height:1px;background:#a0a0a0"></div>
<div class="a" style="left:1343px;top:919px;width:22px;height:1px;background:#707070"></div>
<div class="a" style="left:1293px;top:924px;width:8px;height:1px;background:#b0b0b0"></div>
<div class="a" style="left:1308px;top:924px;width:14px;height:1px;background:#bdbdbd"></div>
<div class="a" style="left:1293px;top:927px;width:8px;height:1px;background:#b0b0b0"></div>
<div class="a" style="left:1308px;top:927px;width:22px;height:1px;background:#bdbdbd"></div>
<div class="a" style="left:1293px;top:930px;width:8px;height:1px;background:#b0b0b0"></div>
<div class="a" style="left:1308px;top:930px;width:45px;height:1px;background:#bdbdbd"></div>
<div class="a" style="left:1293px;top:933px;width:8px;height:1px;background:#b0b0b0"></div>
<div class="a" style="left:1308px;top:933px;width:44px;height:1px;background:#bdbdbd"></div>
<div class="a" style="left:1293px;top:936px;width:8px;height:1px;background:#b0b0b0"></div>
<div class="a" style="left:1308px;top:936px;width:6px;height:1px;background:#bdbdbd"></div>
<div class="a" style="left:1293px;top:939px;width:8px;height:1px;background:#b0b0b0"></div>
<div class="a" style="left:1308px;top:939px;width:10px;height:1px;background:#bdbdbd"></div>
<div class="a" style="left:1293px;top:942px;width:8px;height:1px;background:#b0b0b0"></div>
<div class="a" style="left:1308px;top:942px;width:2px;height:1px;background:#bdbdbd"></div>
<div class="a" style="left:1293px;top:948px;width:14px;height:1px;background:#9a9a9a"></div>
<div class="a" style="left:1293px;top:950px;width:73px;height:6px;background:#f7c21a"></div>
<div class="a" style="left:1293px;top:958px;width:73px;height:1px;background:#e4e4e4"></div>
<div class="a" style="left:1293px;top:961px;width:73px;height:5px;background:#f7c21a"></div>
<div class="a" style="left:1296px;top:968px;width:25px;height:1px;background:#b8b8d8"></div>
<div class="a" style="left:1293px;top:974px;width:7px;height:1px;background:#b0b0b0"></div>
<div class="a" style="left:1293px;top:976px;width:24px;height:1px;background:#a8a8a8"></div>
<div class="a" style="left:1293px;top:982px;width:34px;height:1px;background:#9a9a9a"></div>
<div class="a" style="left:1293px;top:984px;width:34px;height:1px;background:#a8a8a8"></div>
<div class="a" style="left:1293px;top:988px;width:12px;height:1px;background:#a8a8a8"></div>
<div class="a" style="left:1312px;top:988px;width:16px;height:1px;background:#b0b0b0"></div>
<div class="a" style="left:1293px;top:991px;width:12px;height:1px;background:#a8a8a8"></div>
<div class="a" style="left:1312px;top:991px;width:16px;height:1px;background:#b0b0b0"></div>
<svg class="a" style="left:1351px;top:982px;" width="10" height="10" viewBox="0 0 10 10"><rect width="10" height="10" fill="#6a6a6a"/><rect x="1" y="1" width="3" height="3" fill="#fff"/><rect x="6" y="1" width="3" height="3" fill="#fff"/><rect x="1" y="6" width="3" height="3" fill="#fff"/><rect x="5" y="5" width="2" height="2" fill="#ddd"/></svg>
<svg class="a" style="left:1432px;top:877px;" width="13" height="16" viewBox="0 0 13 16"><path d="M1 1 H8.5 L12 4.5 V15 H1 Z" fill="#fff" stroke="#d8312a" stroke-width="1.3"/><path d="M3 12 C5 9 6.5 6 7 4.5 C7.5 3.5 8 4.5 7.5 6 C6.5 8.5 4.5 11 3.5 12 C5 11 8 10 10 10.5" fill="none" stroke="#d8312a" stroke-width="0.9"/></svg>
<div class="t" style="left:1454px;top:879.39px;font-size:11.0px;color:#1f1f1f;">KTB BILLING PPH UMKM 1025....</div>
<div class="a" style="left:1431px;top:904px;width:200px;height:109px;background:#ffffff"></div>
<div class="a" style="left:1431px;top:904px;width:200px;height:5px;background:#f6f6f6"></div>
<div class="a" style="left:1434px;top:905px;width:22px;height:2px;background:#d6d6d6"></div>
<div class="a" style="left:1551px;top:905px;width:20px;height:2px;background:#dedede"></div>
<div class="a" style="left:1596px;top:905px;width:8px;height:4px;background:#3a3a3a;border-radius:2px"></div>
<div class="a" style="left:1605px;top:905px;width:15px;height:4px;background:#d68bd8;border-radius:2px"></div>
<div class="a" style="left:1460px;top:910px;width:37px;height:103px;background:#f6f6f6"></div>
<div class="a" style="left:1592px;top:910px;width:31px;height:103px;background:#f6f6f6"></div>
<div class="a" style="left:1623px;top:910px;width:1px;height:98px;background:#d0d0d0"></div>
<div class="a" style="left:1434px;top:913px;width:12px;height:2px;background:#bbbbbb"></div>
<div class="a" style="left:1436px;top:919px;width:2px;height:2px;background:#d4d4d4"></div>
<div class="a" style="left:1440px;top:919px;width:8px;height:1px;background:#dcdcdc"></div>
<div class="a" style="left:1436px;top:923px;width:2px;height:2px;background:#d4d4d4"></div>
<div class="a" style="left:1440px;top:923px;width:13px;height:1px;background:#dcdcdc"></div>
<div class="a" style="left:1436px;top:927px;width:2px;height:2px;background:#d4d4d4"></div>
<div class="a" style="left:1440px;top:927px;width:9px;height:1px;background:#dcdcdc"></div>
<div class="a" style="left:1436px;top:931px;width:2px;height:2px;background:#d4d4d4"></div>
<div class="a" style="left:1440px;top:931px;width:14px;height:1px;background:#dcdcdc"></div>
<div class="a" style="left:1436px;top:935px;width:2px;height:2px;background:#d4d4d4"></div>
<div class="a" style="left:1440px;top:935px;width:10px;height:1px;background:#dcdcdc"></div>
<div class="a" style="left:1436px;top:939px;width:2px;height:2px;background:#d4d4d4"></div>
<div class="a" style="left:1440px;top:939px;width:15px;height:1px;background:#dcdcdc"></div>
<div class="a" style="left:1436px;top:943px;width:2px;height:2px;background:#d4d4d4"></div>
<div class="a" style="left:1440px;top:943px;width:11px;height:1px;background:#dcdcdc"></div>
<div class="a" style="left:1436px;top:947px;width:2px;height:2px;background:#d4d4d4"></div>
<div class="a" style="left:1440px;top:947px;width:16px;height:1px;background:#dcdcdc"></div>
<div class="a" style="left:1436px;top:951px;width:2px;height:2px;background:#d4d4d4"></div>
<div class="a" style="left:1440px;top:951px;width:12px;height:1px;background:#dcdcdc"></div>
<div class="a" style="left:1436px;top:955px;width:2px;height:2px;background:#d4d4d4"></div>
<div class="a" style="left:1440px;top:955px;width:8px;height:1px;background:#dcdcdc"></div>
<div class="a" style="left:1436px;top:959px;width:2px;height:2px;background:#d4d4d4"></div>
<div class="a" style="left:1440px;top:959px;width:13px;height:1px;background:#dcdcdc"></div>
<div class="a" style="left:1436px;top:963px;width:2px;height:2px;background:#d4d4d4"></div>
<div class="a" style="left:1440px;top:963px;width:9px;height:1px;background:#dcdcdc"></div>
<div class="a" style="left:1436px;top:967px;width:2px;height:2px;background:#d4d4d4"></div>
<div class="a" style="left:1440px;top:967px;width:14px;height:1px;background:#dcdcdc"></div>
<div class="a" style="left:1450px;top:919px;width:5px;height:2px;background:#7b9fd8"></div>
<div class="a" style="left:1441px;top:1005px;width:8px;height:3px;background:#2f6fd6;border-radius:2px"></div>
<div class="a" style="left:1437px;top:1001px;width:16px;height:1px;background:#e6c98a"></div>
<div class="a" style="left:1625px;top:914px;width:3px;height:3px;background:#cfcfcf"></div>
<div class="a" style="left:1625px;top:919px;width:3px;height:3px;background:#cfcfcf"></div>
<div class="a" style="left:1625px;top:924px;width:3px;height:3px;background:#cfcfcf"></div>
<div class="a" style="left:1625px;top:929px;width:3px;height:3px;background:#cfcfcf"></div>
<div class="a" style="left:1625px;top:995px;width:3px;height:3px;background:#cfcfcf"></div>
<div class="a" style="left:1625px;top:1000px;width:3px;height:3px;background:#cfcfcf"></div>
<div class="a" style="left:1625px;top:1005px;width:3px;height:3px;background:#cfcfcf"></div>
<div class="a" style="left:1510px;top:915px;width:6px;height:6px;background:#8a8a8a;border-radius:3px"></div>
<div class="a" style="left:1519px;top:916px;width:22px;height:1px;background:#a8a8a8"></div>
<div class="a" style="left:1519px;top:919px;width:24px;height:1px;background:#b8b8b8"></div>
<div class="a" style="left:1552px;top:914px;width:31px;height:8px;border:1px solid #d8d8d8"></div>
<div class="a" style="left:1560px;top:916px;width:20px;height:1px;background:#a0a0a0"></div>
<div class="a" style="left:1559px;top:919px;width:22px;height:1px;background:#707070"></div>
<div class="a" style="left:1509px;top:924px;width:8px;height:1px;background:#b0b0b0"></div>
<div class="a" style="left:1524px;top:924px;width:14px;height:1px;background:#bdbdbd"></div>
<div class="a" style="left:1509px;top:927px;width:8px;height:1px;background:#b0b0b0"></div>
<div class="a" style="left:1524px;top:927px;width:22px;height:1px;background:#bdbdbd"></div>
<div class="a" style="left:1509px;top:930px;width:8px;height:1px;background:#b0b0b0"></div>
<div class="a" style="left:1524px;top:930px;width:45px;height:1px;background:#bdbdbd"></div>
<div class="a" style="left:1509px;top:933px;width:8px;height:1px;background:#b0b0b0"></div>
<div class="a" style="left:1524px;top:933px;width:44px;height:1px;background:#bdbdbd"></div>
<div class="a" style="left:1509px;top:936px;width:8px;height:1px;background:#b0b0b0"></div>
<div class="a" style="left:1524px;top:936px;width:6px;height:1px;background:#bdbdbd"></div>
<div class="a" style="left:1509px;top:939px;width:8px;height:1px;background:#b0b0b0"></div>
<div class="a" style="left:1524px;top:939px;width:10px;height:1px;background:#bdbdbd"></div>
<div class="a" style="left:1509px;top:942px;width:8px;height:1px;background:#b0b0b0"></div>
<div class="a" style="left:1524px;top:942px;width:2px;height:1px;background:#bdbdbd"></div>
<div class="a" style="left:1509px;top:948px;width:14px;height:1px;background:#9a9a9a"></div>
<div class="a" style="left:1509px;top:950px;width:73px;height:6px;background:#f7c21a"></div>
<div class="a" style="left:1509px;top:958px;width:73px;height:1px;background:#e4e4e4"></div>
<div class="a" style="left:1509px;top:961px;width:73px;height:5px;background:#f7c21a"></div>
<div class="a" style="left:1512px;top:968px;width:25px;height:1px;background:#b8b8d8"></div>
<div class="a" style="left:1509px;top:974px;width:7px;height:1px;background:#b0b0b0"></div>
<div class="a" style="left:1509px;top:976px;width:24px;height:1px;background:#a8a8a8"></div>
<div class="a" style="left:1509px;top:982px;width:34px;height:1px;background:#9a9a9a"></div>
<div class="a" style="left:1509px;top:984px;width:34px;height:1px;background:#a8a8a8"></div>
<div class="a" style="left:1509px;top:988px;width:12px;height:1px;background:#a8a8a8"></div>
<div class="a" style="left:1528px;top:988px;width:16px;height:1px;background:#b0b0b0"></div>
<div class="a" style="left:1509px;top:991px;width:12px;height:1px;background:#a8a8a8"></div>
<div class="a" style="left:1528px;top:991px;width:16px;height:1px;background:#b0b0b0"></div>
<svg class="a" style="left:1567px;top:982px;" width="10" height="10" viewBox="0 0 10 10"><rect width="10" height="10" fill="#6a6a6a"/><rect x="1" y="1" width="3" height="3" fill="#fff"/><rect x="6" y="1" width="3" height="3" fill="#fff"/><rect x="1" y="6" width="3" height="3" fill="#fff"/><rect x="5" y="5" width="2" height="2" fill="#ddd"/></svg>
<svg class="a" style="left:1648px;top:877px;" width="13" height="16" viewBox="0 0 13 16"><path d="M1 1 H8.5 L12 4.5 V15 H1 Z" fill="#fff" stroke="#d8312a" stroke-width="1.3"/><path d="M3 12 C5 9 6.5 6 7 4.5 C7.5 3.5 8 4.5 7.5 6 C6.5 8.5 4.5 11 3.5 12 C5 11 8 10 10 10.5" fill="none" stroke="#d8312a" stroke-width="0.9"/></svg>
<div class="t" style="left:1670px;top:879.39px;font-size:11.0px;color:#1f1f1f;">KTB IDBILLING PPH FINAL OMS...</div>
<div class="a" style="left:1647px;top:904px;width:200px;height:109px;background:#ffffff"></div>
<div class="a" style="left:1647px;top:904px;width:200px;height:5px;background:#f6f6f6"></div>
<div class="a" style="left:1650px;top:905px;width:22px;height:2px;background:#d6d6d6"></div>
<div class="a" style="left:1767px;top:905px;width:20px;height:2px;background:#dedede"></div>
<div class="a" style="left:1812px;top:905px;width:8px;height:4px;background:#3a3a3a;border-radius:2px"></div>
<div class="a" style="left:1821px;top:905px;width:15px;height:4px;background:#d68bd8;border-radius:2px"></div>
<div class="a" style="left:1676px;top:910px;width:37px;height:103px;background:#f6f6f6"></div>
<div class="a" style="left:1808px;top:910px;width:31px;height:103px;background:#f6f6f6"></div>
<div class="a" style="left:1839px;top:910px;width:1px;height:98px;background:#d0d0d0"></div>
<div class="a" style="left:1650px;top:913px;width:12px;height:2px;background:#bbbbbb"></div>
<div class="a" style="left:1652px;top:919px;width:2px;height:2px;background:#d4d4d4"></div>
<div class="a" style="left:1656px;top:919px;width:8px;height:1px;background:#dcdcdc"></div>
<div class="a" style="left:1652px;top:923px;width:2px;height:2px;background:#d4d4d4"></div>
<div class="a" style="left:1656px;top:923px;width:13px;height:1px;background:#dcdcdc"></div>
<div class="a" style="left:1652px;top:927px;width:2px;height:2px;background:#d4d4d4"></div>
<div class="a" style="left:1656px;top:927px;width:9px;height:1px;background:#dcdcdc"></div>
<div class="a" style="left:1652px;top:931px;width:2px;height:2px;background:#d4d4d4"></div>
<div class="a" style="left:1656px;top:931px;width:14px;height:1px;background:#dcdcdc"></div>
<div class="a" style="left:1652px;top:935px;width:2px;height:2px;background:#d4d4d4"></div>
<div class="a" style="left:1656px;top:935px;width:10px;height:1px;background:#dcdcdc"></div>
<div class="a" style="left:1652px;top:939px;width:2px;height:2px;background:#d4d4d4"></div>
<div class="a" style="left:1656px;top:939px;width:15px;height:1px;background:#dcdcdc"></div>
<div class="a" style="left:1652px;top:943px;width:2px;height:2px;background:#d4d4d4"></div>
<div class="a" style="left:1656px;top:943px;width:11px;height:1px;background:#dcdcdc"></div>
<div class="a" style="left:1652px;top:947px;width:2px;height:2px;background:#d4d4d4"></div>
<div class="a" style="left:1656px;top:947px;width:16px;height:1px;background:#dcdcdc"></div>
<div class="a" style="left:1652px;top:951px;width:2px;height:2px;background:#d4d4d4"></div>
<div class="a" style="left:1656px;top:951px;width:12px;height:1px;background:#dcdcdc"></div>
<div class="a" style="left:1652px;top:955px;width:2px;height:2px;background:#d4d4d4"></div>
<div class="a" style="left:1656px;top:955px;width:8px;height:1px;background:#dcdcdc"></div>
<div class="a" style="left:1652px;top:959px;width:2px;height:2px;background:#d4d4d4"></div>
<div class="a" style="left:1656px;top:959px;width:13px;height:1px;background:#dcdcdc"></div>
<div class="a" style="left:1652px;top:963px;width:2px;height:2px;background:#d4d4d4"></div>
<div class="a" style="left:1656px;top:963px;width:9px;height:1px;background:#dcdcdc"></div>
<div class="a" style="left:1652px;top:967px;width:2px;height:2px;background:#d4d4d4"></div>
<div class="a" style="left:1656px;top:967px;width:14px;height:1px;background:#dcdcdc"></div>
<div class="a" style="left:1666px;top:919px;width:5px;height:2px;background:#7b9fd8"></div>
<div class="a" style="left:1657px;top:1005px;width:8px;height:3px;background:#2f6fd6;border-radius:2px"></div>
<div class="a" style="left:1653px;top:1001px;width:16px;height:1px;background:#e6c98a"></div>
<div class="a" style="left:1841px;top:914px;width:3px;height:3px;background:#cfcfcf"></div>
<div class="a" style="left:1841px;top:919px;width:3px;height:3px;background:#cfcfcf"></div>
<div class="a" style="left:1841px;top:924px;width:3px;height:3px;background:#cfcfcf"></div>
<div class="a" style="left:1841px;top:929px;width:3px;height:3px;background:#cfcfcf"></div>
<div class="a" style="left:1841px;top:995px;width:3px;height:3px;background:#cfcfcf"></div>
<div class="a" style="left:1841px;top:1000px;width:3px;height:3px;background:#cfcfcf"></div>
<div class="a" style="left:1841px;top:1005px;width:3px;height:3px;background:#cfcfcf"></div>
<div class="a" style="left:1726px;top:915px;width:6px;height:6px;background:#8a8a8a;border-radius:3px"></div>
<div class="a" style="left:1735px;top:916px;width:22px;height:1px;background:#a8a8a8"></div>
<div class="a" style="left:1735px;top:919px;width:24px;height:1px;background:#b8b8b8"></div>
<div class="a" style="left:1768px;top:914px;width:31px;height:8px;border:1px solid #d8d8d8"></div>
<div class="a" style="left:1776px;top:916px;width:20px;height:1px;background:#a0a0a0"></div>
<div class="a" style="left:1775px;top:919px;width:22px;height:1px;background:#707070"></div>
<div class="a" style="left:1725px;top:924px;width:8px;height:1px;background:#b0b0b0"></div>
<div class="a" style="left:1740px;top:924px;width:14px;height:1px;background:#bdbdbd"></div>
<div class="a" style="left:1725px;top:927px;width:8px;height:1px;background:#b0b0b0"></div>
<div class="a" style="left:1740px;top:927px;width:22px;height:1px;background:#bdbdbd"></div>
<div class="a" style="left:1725px;top:930px;width:8px;height:1px;background:#b0b0b0"></div>
<div class="a" style="left:1740px;top:930px;width:45px;height:1px;background:#bdbdbd"></div>
<div class="a" style="left:1725px;top:933px;width:8px;height:1px;background:#b0b0b0"></div>
<div class="a" style="left:1740px;top:933px;width:44px;height:1px;background:#bdbdbd"></div>
<div class="a" style="left:1725px;top:936px;width:8px;height:1px;background:#b0b0b0"></div>
<div class="a" style="left:1740px;top:936px;width:6px;height:1px;background:#bdbdbd"></div>
<div class="a" style="left:1725px;top:939px;width:8px;height:1px;background:#b0b0b0"></div>
<div class="a" style="left:1740px;top:939px;width:10px;height:1px;background:#bdbdbd"></div>
<div class="a" style="left:1725px;top:942px;width:8px;height:1px;background:#b0b0b0"></div>
<div class="a" style="left:1740px;top:942px;width:2px;height:1px;background:#bdbdbd"></div>
<div class="a" style="left:1725px;top:948px;width:14px;height:1px;background:#9a9a9a"></div>
<div class="a" style="left:1725px;top:950px;width:73px;height:6px;background:#f7c21a"></div>
<div class="a" style="left:1725px;top:958px;width:73px;height:1px;background:#e4e4e4"></div>
<div class="a" style="left:1725px;top:961px;width:73px;height:5px;background:#f7c21a"></div>
<div class="a" style="left:1728px;top:968px;width:25px;height:1px;background:#b8b8d8"></div>
<div class="a" style="left:1725px;top:974px;width:7px;height:1px;background:#b0b0b0"></div>
<div class="a" style="left:1725px;top:976px;width:24px;height:1px;background:#a8a8a8"></div>
<div class="a" style="left:1725px;top:982px;width:34px;height:1px;background:#9a9a9a"></div>
<div class="a" style="left:1725px;top:984px;width:34px;height:1px;background:#a8a8a8"></div>
<div class="a" style="left:1725px;top:988px;width:12px;height:1px;background:#a8a8a8"></div>
<div class="a" style="left:1744px;top:988px;width:16px;height:1px;background:#b0b0b0"></div>
<div class="a" style="left:1725px;top:991px;width:12px;height:1px;background:#a8a8a8"></div>
<div class="a" style="left:1744px;top:991px;width:16px;height:1px;background:#b0b0b0"></div>
<svg class="a" style="left:1783px;top:982px;" width="10" height="10" viewBox="0 0 10 10"><rect width="10" height="10" fill="#6a6a6a"/><rect x="1" y="1" width="3" height="3" fill="#fff"/><rect x="6" y="1" width="3" height="3" fill="#fff"/><rect x="1" y="6" width="3" height="3" fill="#fff"/><rect x="5" y="5" width="2" height="2" fill="#ddd"/></svg>
</body></html>
